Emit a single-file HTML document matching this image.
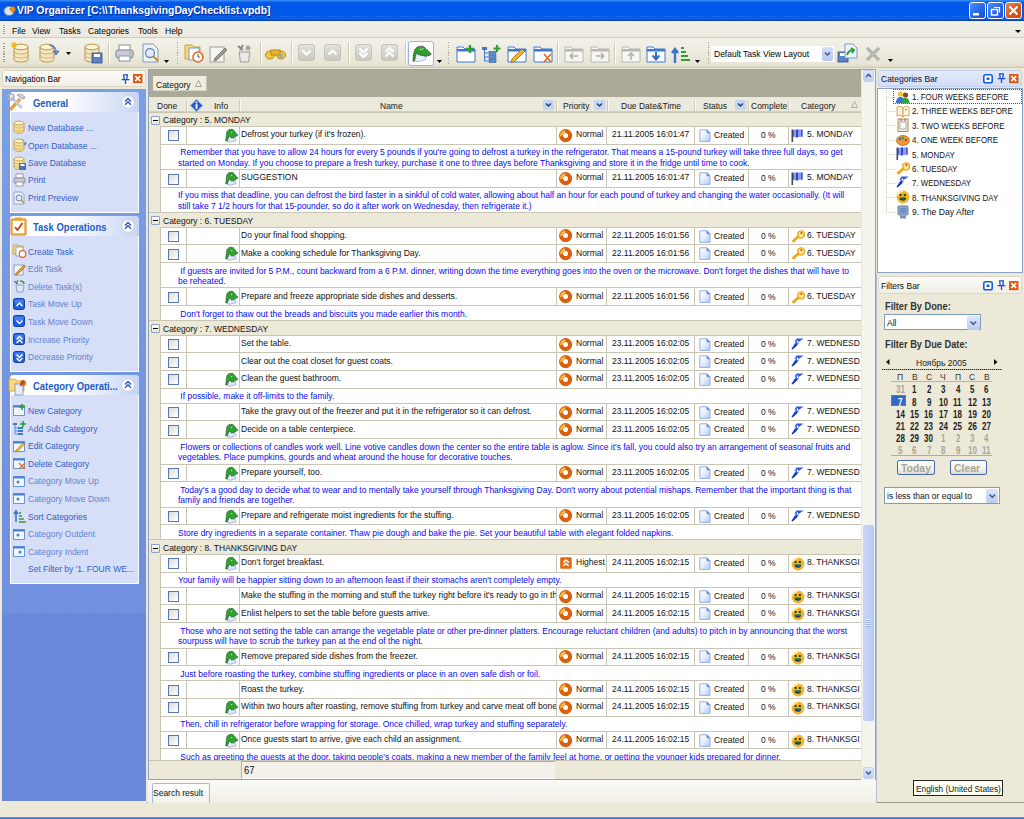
<!DOCTYPE html><html><head><meta charset="utf-8"><style>
*{box-sizing:border-box;margin:0;padding:0}
html,body{width:1024px;height:819px;overflow:hidden;background:#ECE9D8;font-family:"Liberation Sans",sans-serif;font-size:10px;line-height:10px;color:#000}
.a{position:absolute}
.tx{position:absolute;white-space:nowrap;transform:scaleX(.885);transform-origin:0 0;line-height:10px;font-size:9.6px}
.b{font-weight:bold}
svg{position:absolute;overflow:visible}
</style></head><body>
<svg width="0" height="0" style="position:absolute"><defs><linearGradient id="dg" x1="0" y1="0" x2="1" y2="1"><stop offset="0" stop-color="#FFFFFF"/><stop offset=".5" stop-color="#E6EEFC"/><stop offset="1" stop-color="#AFC6F2"/></linearGradient></defs></svg>
<div class="a" style="left:0px;top:0px;width:1024px;height:21px;background:linear-gradient(#3D8EF8 0px,#2C7CF4 1px,#0A60EC 2px,#0058E8 3px,#0058E8 15px,#0056E4 20px,#0844B8 20px)"></div>
<div class="a" style="left:0px;top:16px;width:1024px;height:1px;background:repeating-linear-gradient(90deg,rgba(0,0,0,0) 0 1px,rgba(90,160,255,.55) 1px 2px,rgba(0,0,0,0) 2px 3px)"></div>
<div class="a" style="left:0px;top:18px;width:1024px;height:1px;background:repeating-linear-gradient(90deg,rgba(90,160,255,.55) 0 1px,rgba(0,0,0,0) 1px 3px)"></div>
<svg style="left:3px;top:3px" width="14" height="14" viewBox="0 0 14 14"><ellipse cx="6" cy="8" rx="5" ry="4.5" fill="#DDE3EE" stroke="#7A8AA8" stroke-width=".8"/><path d="M6 6l4-3 3 4-3 3z" fill="#E8700A"/><circle cx="10" cy="6" r="2" fill="#F09020"/></svg>
<div class="tx " style="left:17px;top:5.2px;font-size:11.5px;color:#fff;font-weight:bold;text-shadow:1px 1px 0 #0A2A8C;transform:scaleX(.9)">VIP Organizer [C:\\ThanksgivingDayChecklist.vpdb]</div>
<div class="a" style="left:969px;top:2px;width:17px;height:17px;border:1px solid #fff;border-radius:3px;background:linear-gradient(135deg,#4F8FF8,#2563E6 60%,#1B50D0)"></div>
<svg style="left:969px;top:2px" width="17" height="17" viewBox="0 0 17 17"><rect x="4" y="11" width="6" height="2.5" fill="#fff"/></svg>
<div class="a" style="left:987px;top:2px;width:17px;height:17px;border:1px solid #fff;border-radius:3px;background:linear-gradient(135deg,#4F8FF8,#2563E6 60%,#1B50D0)"></div>
<svg style="left:987px;top:2px" width="17" height="17" viewBox="0 0 17 17"><rect x="4.5" y="7.5" width="6" height="5.5" fill="none" stroke="#fff" stroke-width="1.4"/><path d="M7 5.5h5.5v5" fill="none" stroke="#fff" stroke-width="1.2"/></svg>
<div class="a" style="left:1005px;top:2px;width:17px;height:17px;border:1px solid #fff;border-radius:3px;background:linear-gradient(135deg,#E8845A,#D85A1E 50%,#C8480E)"></div>
<svg style="left:1005px;top:2px" width="17" height="17" viewBox="0 0 17 17"><path d="M4.5 4.5l8 8M12.5 4.5l-8 8" stroke="#fff" stroke-width="2"/></svg>
<div class="a" style="left:0px;top:21px;width:1024px;height:17px;background:linear-gradient(#F0EFE6,#ECEADF);border-bottom:1px solid #D6C9B6"></div>
<div class="a" style="left:3px;top:25px;width:2px;height:1px;background:#A8A594"></div>
<div class="a" style="left:3px;top:27px;width:2px;height:1px;background:#A8A594"></div>
<div class="a" style="left:3px;top:29px;width:2px;height:1px;background:#A8A594"></div>
<div class="a" style="left:3px;top:31px;width:2px;height:1px;background:#A8A594"></div>
<div class="a" style="left:3px;top:33px;width:2px;height:1px;background:#A8A594"></div>
<div class="tx " style="left:11.5px;top:25.5px;">File</div>
<div class="tx " style="left:32px;top:25.5px;">View</div>
<div class="tx " style="left:58.5px;top:25.5px;">Tasks</div>
<div class="tx " style="left:88px;top:25.5px;">Categories</div>
<div class="tx " style="left:137.5px;top:25.5px;">Tools</div>
<div class="tx " style="left:165px;top:25.5px;">Help</div>
<svg style="left:1014px;top:29px" width="8" height="6" viewBox="0 0 8 6"><path d="M1 1h6l-3 3z" fill="#000"/></svg>
<div class="a" style="left:0px;top:38px;width:1024px;height:30px;background:linear-gradient(#F2F1E8 0%,#EEECE0 45%,#E8E5D6 85%,#DCD8C6 100%)"></div>
<div class="a" style="left:0px;top:67px;width:1024px;height:1px;background:#CBC7B3"></div>
<div class="a" style="left:3px;top:43.0px;width:2px;height:1.3px;background:#A09D8C"></div>
<div class="a" style="left:3px;top:45.6px;width:2px;height:1.3px;background:#A09D8C"></div>
<div class="a" style="left:3px;top:48.2px;width:2px;height:1.3px;background:#A09D8C"></div>
<div class="a" style="left:3px;top:50.8px;width:2px;height:1.3px;background:#A09D8C"></div>
<div class="a" style="left:3px;top:53.4px;width:2px;height:1.3px;background:#A09D8C"></div>
<div class="a" style="left:3px;top:56.0px;width:2px;height:1.3px;background:#A09D8C"></div>
<div class="a" style="left:3px;top:58.6px;width:2px;height:1.3px;background:#A09D8C"></div>
<div class="a" style="left:3px;top:61.2px;width:2px;height:1.3px;background:#A09D8C"></div>
<svg style="left:12px;top:43px" width="18" height="20" viewBox="0 0 18 20"><path d="M2 4v12c0 2 3 3 7 3s7-1 7-3V4" fill="#F3E7C0" stroke="#B89548" stroke-width="1"/><ellipse cx="9" cy="4" rx="7" ry="2.8" fill="#FBF3D8" stroke="#B89548"/><path d="M2 8c0 2 3 3 7 3s7-1 7-3M2 12c0 2 3 3 7 3s7-1 7-3" fill="none" stroke="#D8B060" stroke-width="1"/><path d="M0 0l4 4M4 0L0 4M2 -1v6M-1 2h6" stroke="#F5B818" stroke-width="1.2"/></svg>
<svg style="left:38px;top:43px" width="18" height="20" viewBox="0 0 18 20"><path d="M2 4v12c0 2 3 3 7 3s7-1 7-3V4" fill="#F3E7C0" stroke="#B89548" stroke-width="1"/><ellipse cx="9" cy="4" rx="7" ry="2.8" fill="#FBF3D8" stroke="#B89548"/><path d="M2 8c0 2 3 3 7 3s7-1 7-3M2 12c0 2 3 3 7 3s7-1 7-3" fill="none" stroke="#D8B060" stroke-width="1"/><path d="M11 2c4 0 7 2 7 6l-3 0 3 4 3-4h-2" fill="#5B8FD8" stroke="#3A6AB8" stroke-width=".8"/></svg>
<svg style="left:66px;top:52px" width="6" height="4" viewBox="0 0 6 4"><path d="M0 0h5l-2.5 3z" fill="#000"/></svg>
<svg style="left:83px;top:43px" width="18" height="20" viewBox="0 0 18 20"><path d="M2 4v12c0 2 3 3 7 3s7-1 7-3V4" fill="#F3E7C0" stroke="#B89548" stroke-width="1"/><ellipse cx="9" cy="4" rx="7" ry="2.8" fill="#FBF3D8" stroke="#B89548"/><path d="M2 8c0 2 3 3 7 3s7-1 7-3M2 12c0 2 3 3 7 3s7-1 7-3" fill="none" stroke="#D8B060" stroke-width="1"/><rect x="9" y="10" width="10" height="10" fill="#5B84C4" stroke="#2C4C8C" stroke-width=".8"/><rect x="11" y="11" width="6" height="3" fill="#fff"/></svg>
<div class="a" style="left:108px;top:42px;width:1px;height:22px;background:#CFCBB8"></div>
<div class="a" style="left:109px;top:42px;width:1px;height:22px;background:#FFFFFF"></div>
<svg style="left:115px;top:45px" width="19" height="17" viewBox="0 0 19 17"><rect x="4" y="0" width="11" height="6" fill="#fff" stroke="#8C8C8C"/><rect x="1" y="5" width="17" height="8" rx="2" fill="#C8CCD8" stroke="#7C808C"/><rect x="4" y="11" width="11" height="5" fill="#fff" stroke="#8C8C8C"/><circle cx="15" cy="8" r=".8" fill="#30B030"/></svg>
<svg style="left:142px;top:43px" width="18" height="20" viewBox="0 0 18 20"><path d="M1 1h10l5 5v13H1z" fill="#EEF3FB" stroke="#7E98C0"/><circle cx="8" cy="10" r="4.5" fill="#DDEAF8" stroke="#6A88B8" stroke-width="1.3"/><path d="M11 13l5 5" stroke="#C89020" stroke-width="2"/></svg>
<svg style="left:164px;top:60px" width="6" height="4" viewBox="0 0 6 4"><path d="M0 0h5l-2.5 3z" fill="#000"/></svg>
<div class="a" style="left:177px;top:42.0px;width:1px;height:1.3px;background:#A8A594"></div>
<div class="a" style="left:177px;top:44.6px;width:1px;height:1.3px;background:#A8A594"></div>
<div class="a" style="left:177px;top:47.2px;width:1px;height:1.3px;background:#A8A594"></div>
<div class="a" style="left:177px;top:49.8px;width:1px;height:1.3px;background:#A8A594"></div>
<div class="a" style="left:177px;top:52.4px;width:1px;height:1.3px;background:#A8A594"></div>
<div class="a" style="left:177px;top:55.0px;width:1px;height:1.3px;background:#A8A594"></div>
<div class="a" style="left:177px;top:57.6px;width:1px;height:1.3px;background:#A8A594"></div>
<div class="a" style="left:177px;top:60.2px;width:1px;height:1.3px;background:#A8A594"></div>
<div class="a" style="left:177px;top:62.8px;width:1px;height:1.3px;background:#A8A594"></div>
<svg style="left:184px;top:43px" width="20" height="20" viewBox="0 0 20 20"><path d="M1 2h7l2 2h6v12H1z" fill="#F7D87A" stroke="#C8A040"/><rect x="5" y="5" width="10" height="12" fill="#fff" stroke="#7E98C0"/><circle cx="14" cy="14" r="5" fill="#fff" stroke="#E06818" stroke-width="1.5"/><path d="M14 11v3h2" stroke="#555" fill="none"/></svg>
<svg style="left:209px;top:43px" width="20" height="20" viewBox="0 0 20 20"><rect x="1" y="4" width="14" height="15" fill="#F4F4F0" stroke="#A0A098"/><path d="M6 15l10-10 2 2-10 10-3 1z" fill="#9A9A92" stroke="#707068" stroke-width=".8"/></svg>
<svg style="left:235px;top:43px" width="20" height="20" viewBox="0 0 20 20"><path d="M4 9h11l-1.5 10h-8z" fill="#E8E8E4" stroke="#9C9C98"/><path d="M3 3l5 4M8 2l-3 5" stroke="#8A8A86" stroke-width="2"/><circle cx="13" cy="5" r="2.5" fill="#A8A8A4"/></svg>
<div class="a" style="left:260px;top:42px;width:1px;height:22px;background:#CFCBB8"></div>
<div class="a" style="left:261px;top:42px;width:1px;height:22px;background:#FFFFFF"></div>
<svg style="left:265px;top:47px" width="21" height="13" viewBox="0 0 21 13"><ellipse cx="5" cy="8" rx="4.5" ry="4" fill="#F2C838" stroke="#B08A18"/><ellipse cx="16" cy="8" rx="4.5" ry="4" fill="#F2C838" stroke="#B08A18"/><rect x="6" y="3" width="9" height="5" fill="#E8B828" stroke="#B08A18"/><circle cx="16" cy="9" r="2" fill="#8CA8D8"/></svg>
<div class="a" style="left:291px;top:42px;width:1px;height:22px;background:#CFCBB8"></div>
<div class="a" style="left:292px;top:42px;width:1px;height:22px;background:#FFFFFF"></div>
<div class="a" style="left:298px;top:44px;width:17px;height:17px;border-radius:3px;background:linear-gradient(#E2E2DA,#C8C8C0);border:1px solid #C4C4BA"></div>
<svg style="left:298px;top:44px" width="17" height="17" viewBox="0 0 17 17"><path d="M4.5 6.5l4 4 4-4" stroke="#fff" stroke-width="2.2" fill="none"/></svg>
<div class="a" style="left:324px;top:44px;width:17px;height:17px;border-radius:3px;background:linear-gradient(#E2E2DA,#C8C8C0);border:1px solid #C4C4BA"></div>
<svg style="left:324px;top:44px" width="17" height="17" viewBox="0 0 17 17"><path d="M4.5 10.5l4-4 4 4" stroke="#fff" stroke-width="2.2" fill="none"/></svg>
<div class="a" style="left:348px;top:42px;width:1px;height:22px;background:#CFCBB8"></div>
<div class="a" style="left:349px;top:42px;width:1px;height:22px;background:#FFFFFF"></div>
<div class="a" style="left:355px;top:44px;width:17px;height:17px;border-radius:3px;background:linear-gradient(#E2E2DA,#C8C8C0);border:1px solid #C4C4BA"></div>
<svg style="left:355px;top:44px" width="17" height="17" viewBox="0 0 17 17"><path d="M4.5 4.5l4 4 4-4M4.5 9l4 4 4-4" stroke="#fff" stroke-width="2" fill="none"/></svg>
<div class="a" style="left:381px;top:44px;width:17px;height:17px;border-radius:3px;background:linear-gradient(#E2E2DA,#C8C8C0);border:1px solid #C4C4BA"></div>
<svg style="left:381px;top:44px" width="17" height="17" viewBox="0 0 17 17"><path d="M4.5 8l4-4 4 4M4.5 12.5l4-4 4 4" stroke="#fff" stroke-width="2" fill="none"/></svg>
<div class="a" style="left:405px;top:42px;width:1px;height:22px;background:#CFCBB8"></div>
<div class="a" style="left:406px;top:42px;width:1px;height:22px;background:#FFFFFF"></div>
<div class="a" style="left:408px;top:41px;width:25.5px;height:25px;border:1px solid #9AB4DE;border-radius:3px;background:#FFFFFF"></div>
<svg style="left:411.5px;top:45px" width="21" height="18" viewBox="0 0 21 18"><path d="M3 16.5L4.5 6 8 10l6.5 1-1 3.5L7 16.5z" fill="#E6EEFA" stroke="#A8BCE0" stroke-width=".9"/><path d="M1 16C1 10 2 5.5 3.8 3.3 5.3 1.6 8 .8 11.3 1.3L19.5 9 17.5 10.5 13.5 11.3 10 10.5 6 9.5 4.2 8 2.2 16.3z" fill="#2E9E2E" stroke="#303030" stroke-width=".9" stroke-dasharray="1.3 .9"/><circle cx="8.5" cy="4.5" r=".8" fill="#CFE8CF"/><circle cx="10.8" cy="4" r=".8" fill="#CFE8CF"/></svg>
<svg style="left:436.5px;top:60px" width="6" height="4" viewBox="0 0 6 4"><path d="M0 0h5l-2.5 3z" fill="#000"/></svg>
<div class="a" style="left:448px;top:42.0px;width:1px;height:1.3px;background:#A8A594"></div>
<div class="a" style="left:448px;top:44.6px;width:1px;height:1.3px;background:#A8A594"></div>
<div class="a" style="left:448px;top:47.2px;width:1px;height:1.3px;background:#A8A594"></div>
<div class="a" style="left:448px;top:49.8px;width:1px;height:1.3px;background:#A8A594"></div>
<div class="a" style="left:448px;top:52.4px;width:1px;height:1.3px;background:#A8A594"></div>
<div class="a" style="left:448px;top:55.0px;width:1px;height:1.3px;background:#A8A594"></div>
<div class="a" style="left:448px;top:57.6px;width:1px;height:1.3px;background:#A8A594"></div>
<div class="a" style="left:448px;top:60.2px;width:1px;height:1.3px;background:#A8A594"></div>
<div class="a" style="left:448px;top:62.8px;width:1px;height:1.3px;background:#A8A594"></div>
<svg style="left:456px;top:45px" width="20" height="18" viewBox="0 0 20 18"><path d="M1 2h6l2 2h10v13H1z" fill="#fff" stroke="#3C7AD0"/><rect x="1" y="4" width="18" height="2.5" fill="#3C7AD0"/><path d="M14 0v8M10 4h8" stroke="#2EA02E" stroke-width="2.4"/></svg>
<svg style="left:481px;top:45px" width="20" height="18" viewBox="0 0 20 18"><rect x="1" y="2" width="5" height="3" fill="#3C7AD0"/><path d="M3.5 5v11M3.5 8h4M3.5 12h4M3.5 16h4" stroke="#3C7AD0"/><rect x="8" y="6.5" width="7" height="3" fill="#5A8CD8" stroke="#2E5EA8" stroke-width=".6"/><rect x="8" y="10.5" width="7" height="3" fill="#5A8CD8" stroke="#2E5EA8" stroke-width=".6"/><rect x="8" y="14.5" width="7" height="3" fill="#5A8CD8" stroke="#2E5EA8" stroke-width=".6"/><path d="M16 0v7M12.5 3.5h7" stroke="#2EA02E" stroke-width="2.2"/></svg>
<svg style="left:507px;top:45px" width="20" height="18" viewBox="0 0 20 18"><path d="M1 2h6l2 2h10v13H1z" fill="#fff" stroke="#3C7AD0"/><rect x="1" y="4" width="18" height="2.5" fill="#3C7AD0"/><path d="M5 14l10-10 2.5 2.5-10 10-3.5 1z" fill="#F2B430" stroke="#9C6A10" stroke-width=".8"/></svg>
<svg style="left:533px;top:45px" width="20" height="18" viewBox="0 0 20 18"><path d="M1 2h6l2 2h10v13H1z" fill="#fff" stroke="#3C7AD0"/><rect x="1" y="4" width="18" height="2.5" fill="#3C7AD0"/><path d="M11 9l7 8M18 9l-7 8" stroke="#E07020" stroke-width="1.8"/></svg>
<div class="a" style="left:557px;top:42px;width:1px;height:22px;background:#CFCBB8"></div>
<div class="a" style="left:558px;top:42px;width:1px;height:22px;background:#FFFFFF"></div>
<svg style="left:564px;top:45px" width="20" height="18" viewBox="0 0 20 18"><path d="M1 2h6l2 2h10v13H1z" fill="#F6F6F2" stroke="#B8B8B0"/><rect x="1" y="4" width="18" height="2.5" fill="#B8B8B0"/><path d="M6 11h8M6 11l3-3M6 11l3 3" stroke="#B0B0A8" stroke-width="1.5" fill="none"/></svg>
<svg style="left:590px;top:45px" width="20" height="18" viewBox="0 0 20 18"><path d="M1 2h6l2 2h10v13H1z" fill="#F6F6F2" stroke="#B8B8B0"/><rect x="1" y="4" width="18" height="2.5" fill="#B8B8B0"/><path d="M6 11h8M14 11l-3-3M14 11l-3 3" stroke="#B0B0A8" stroke-width="1.5" fill="none"/></svg>
<div class="a" style="left:614px;top:42px;width:1px;height:22px;background:#CFCBB8"></div>
<div class="a" style="left:615px;top:42px;width:1px;height:22px;background:#FFFFFF"></div>
<svg style="left:621px;top:45px" width="20" height="18" viewBox="0 0 20 18"><path d="M1 2h6l2 2h10v13H1z" fill="#F6F6F2" stroke="#B8B8B0"/><rect x="1" y="4" width="18" height="2.5" fill="#B8B8B0"/><path d="M10 15V8M7 11l3-3 3 3" stroke="#B0B0A8" stroke-width="1.5" fill="none"/></svg>
<svg style="left:646px;top:45px" width="20" height="18" viewBox="0 0 20 18"><path d="M1 2h6l2 2h10v13H1z" fill="#fff" stroke="#3C7AD0"/><rect x="1" y="4" width="18" height="2.5" fill="#3C7AD0"/><path d="M10 7v7M6.5 10.5l3.5 4 3.5-4" stroke="#2E6AC8" stroke-width="2" fill="none"/></svg>
<svg style="left:671px;top:44px" width="20" height="20" viewBox="0 0 20 20"><path d="M4 19V6M1 9l3-4 3 4" stroke="#3A78D0" stroke-width="2.4" fill="none"/><path d="M10 4h3M10 8h5M10 12h7M10 16h9" stroke="#3A9A3A" stroke-width="2.2"/></svg>
<svg style="left:695px;top:60px" width="6" height="4" viewBox="0 0 6 4"><path d="M0 0h5l-2.5 3z" fill="#000"/></svg>
<div class="a" style="left:708px;top:42.0px;width:1px;height:1.3px;background:#A8A594"></div>
<div class="a" style="left:708px;top:44.6px;width:1px;height:1.3px;background:#A8A594"></div>
<div class="a" style="left:708px;top:47.2px;width:1px;height:1.3px;background:#A8A594"></div>
<div class="a" style="left:708px;top:49.8px;width:1px;height:1.3px;background:#A8A594"></div>
<div class="a" style="left:708px;top:52.4px;width:1px;height:1.3px;background:#A8A594"></div>
<div class="a" style="left:708px;top:55.0px;width:1px;height:1.3px;background:#A8A594"></div>
<div class="a" style="left:708px;top:57.6px;width:1px;height:1.3px;background:#A8A594"></div>
<div class="a" style="left:708px;top:60.2px;width:1px;height:1.3px;background:#A8A594"></div>
<div class="a" style="left:708px;top:62.8px;width:1px;height:1.3px;background:#A8A594"></div>
<div class="a" style="left:711px;top:45.5px;width:123px;height:16px;background:#fff;border:1px solid #FFFFFF"></div>
<div class="tx " style="left:714px;top:49px;">Default Task View Layout</div>
<div class="a" style="left:822px;top:46.5px;width:11px;height:14px;background:linear-gradient(#D6E0F8,#B4C6F0);border-radius:2px"></div>
<svg style="left:822px;top:47px" width="11" height="14" viewBox="0 0 11 14"><path d="M3 5.5l2.5 2.5 2.5-2.5" stroke="#4D6185" stroke-width="1.6" fill="none"/></svg>
<svg style="left:837px;top:43px" width="21" height="20" viewBox="0 0 21 20"><rect x="1" y="9" width="10" height="10" fill="#5B84C4" stroke="#2C4C8C" stroke-width=".8"/><rect x="3" y="10" width="6" height="3" fill="#fff"/><path d="M8 1h8l4 4v10H8z" fill="#EEF4FF" stroke="#7E98C0"/><path d="M10 12c1-4 4-5 7-5M14 5l3 2-2 3" stroke="#2EA02E" stroke-width="2" fill="none"/></svg>
<svg style="left:865px;top:46px" width="16" height="16" viewBox="0 0 16 16"><path d="M2 2l12 12M14 2L2 14" stroke="#9C9C94" stroke-width="3"/><path d="M2 2l12 12M14 2L2 14" stroke="#C4C4BC" stroke-width="1.4"/></svg>
<svg style="left:888px;top:59px" width="6" height="4" viewBox="0 0 6 4"><path d="M0 0h5l-2.5 3z" fill="#000"/></svg>
<div class="a" style="left:0px;top:802px;width:1024px;height:1px;background:#9C9886"></div>
<div class="a" style="left:0px;top:803px;width:1024px;height:14px;background:#ECE9D8"></div>
<div class="a" style="left:0px;top:817px;width:1024px;height:2px;background:linear-gradient(#6A9AF0,#2E64D8)"></div>
<div class="a" style="left:0px;top:68px;width:147px;height:735px;background:#ECE9D8"></div>
<div class="a" style="left:2px;top:69.5px;width:144px;height:17px;border:1px solid #DAD6C6;border-radius:3px;background:linear-gradient(#FCFBF7,#F1EFE6)"></div>
<div class="tx " style="left:4.5px;top:74px;color:#000">Navigation Bar</div>
<svg style="left:120.5px;top:73.5px" width="9" height="10" viewBox="0 0 9 10"><path d="M2 .8h5M2.6 .8l.6 4.2M6.4 .8L5.8 5M.6 5.6h7.8M4.5 5.6V10" stroke="#2050C8" stroke-width="1.3" fill="none"/></svg>
<svg style="left:133px;top:74px" width="9.5" height="9.2" viewBox="0 0 9.5 9.2"><rect x="0" y="0" width="9.5" height="9.2" fill="#DA5C12"/><path d="M2.3 2.2l4.9 4.8M7.2 2.2L2.3 7" stroke="#fff" stroke-width="1.7"/></svg>
<div class="a" style="left:2px;top:89px;width:144px;height:712px;background:linear-gradient(#7BA0E6 0px,#7596E2 250px,#6F8FDF 524px,#6A89DC 524.5px,#6A89DC 712px)"></div>
<div class="a" style="left:9px;top:583.6px;width:136px;height:29.5px;background:repeating-linear-gradient(90deg,rgba(255,255,255,.05) 0 1px,rgba(0,0,0,0) 1px 3px)"></div>
<div class="a" style="left:9.5px;top:92px;width:129px;height:20px;border-radius:3px 3px 0 0;background:linear-gradient(90deg,#FFFFFF 0%,#FFFFFF 40%,#E4EBFA 70%,#C7D4F4 100%)"></div>
<div class="a" style="left:9.5px;top:112px;width:129px;height:101px;background:#D6DFF7;border:1px solid #fff;border-top:none"></div>
<svg style="left:7px;top:93px" width="19" height="20" viewBox="0 0 19 20"><path d="M3 17L13 6" stroke="#E0801A" stroke-width="3.2"/><path d="M3 17L13 6" stroke="#F4B040" stroke-width="1.2"/><path d="M4 4l11 11" stroke="#C8CCD4" stroke-width="3"/><path d="M10 2c3-2 7 0 8 3l-3 1-2-2z" fill="#D0D4DC" stroke="#8890A0" stroke-width=".8"/><circle cx="4" cy="4" r="3" fill="none" stroke="#A8B0C0" stroke-width="1.4"/></svg>
<div class="tx " style="left:32.5px;top:97.8px;color:#215DC6;font-weight:bold;font-size:11px;transform:scaleX(.86)">General</div>
<svg style="left:121px;top:95.0px" width="14" height="14" viewBox="0 0 14 14"><circle cx="7" cy="7" r="6.3" fill="#fff" stroke="#C8D0E0" stroke-width="1"/><path d="M4 6.5l3-3 3 3M4 9.8l3-3 3 3" stroke="#2552C0" stroke-width="1.4" fill="none"/></svg>
<svg style="left:13px;top:120.4px" width="12" height="14" viewBox="0 0 12 14"><path d="M1 3v8c0 1.5 2 2.3 5 2.3s5-.8 5-2.3V3" fill="#F3E2A8" stroke="#C09838" stroke-width=".8"/><ellipse cx="6" cy="3" rx="5" ry="2" fill="#FBF0C8" stroke="#C09838" stroke-width=".8"/><path d="M1 6c0 1.3 2 2 5 2s5-.7 5-2M1 9c0 1.3 2 2 5 2s5-.7 5-2" fill="none" stroke="#D8A838" stroke-width=".8"/></svg>
<div class="tx " style="left:28.3px;top:122.9px;color:#3560C8">New Database ...</div>
<svg style="left:13px;top:138px" width="12" height="14" viewBox="0 0 12 14"><path d="M1 3v8c0 1.5 2 2.3 5 2.3s5-.8 5-2.3V3" fill="#F3E2A8" stroke="#C09838" stroke-width=".8"/><ellipse cx="6" cy="3" rx="5" ry="2" fill="#FBF0C8" stroke="#C09838" stroke-width=".8"/><path d="M1 6c0 1.3 2 2 5 2s5-.7 5-2M1 9c0 1.3 2 2 5 2s5-.7 5-2" fill="none" stroke="#D8A838" stroke-width=".8"/><path d="M7 1c3 0 5 2 5 4l-2 0 2 3 2-3" fill="#5B8FD8"/></svg>
<div class="tx " style="left:28.3px;top:140.5px;color:#3560C8">Open Database ...</div>
<svg style="left:13px;top:155.5px" width="12" height="14" viewBox="0 0 12 14"><path d="M1 3v8c0 1.5 2 2.3 5 2.3s5-.8 5-2.3V3" fill="#F3E2A8" stroke="#C09838" stroke-width=".8"/><ellipse cx="6" cy="3" rx="5" ry="2" fill="#FBF0C8" stroke="#C09838" stroke-width=".8"/><path d="M1 6c0 1.3 2 2 5 2s5-.7 5-2M1 9c0 1.3 2 2 5 2s5-.7 5-2" fill="none" stroke="#D8A838" stroke-width=".8"/><rect x="6" y="7" width="7" height="7" fill="#4A70B8"/><rect x="7.5" y="8" width="4" height="2" fill="#fff"/></svg>
<div class="tx " style="left:28.3px;top:158.0px;color:#3560C8">Save Database</div>
<svg style="left:13px;top:172.8px" width="13" height="14" viewBox="0 0 13 14"><rect x="3" y="1" width="7" height="4" fill="#fff" stroke="#8C8C8C" stroke-width=".8"/><rect x="1" y="5" width="11" height="5" rx="1" fill="#C8CCD8" stroke="#7C808C" stroke-width=".8"/><rect x="3" y="9" width="7" height="4" fill="#fff" stroke="#8C8C8C" stroke-width=".8"/></svg>
<div class="tx " style="left:28.3px;top:175.3px;color:#3560C8">Print</div>
<svg style="left:13px;top:190.5px" width="13" height="14" viewBox="0 0 13 14"><path d="M1 1h7l3 3v9H1z" fill="#EEF3FB" stroke="#7E98C0" stroke-width=".8"/><circle cx="6" cy="7" r="3" fill="#DDEAF8" stroke="#6A88B8"/><path d="M8 9l3 3" stroke="#C89020" stroke-width="1.5"/></svg>
<div class="tx " style="left:28.3px;top:193.0px;color:#3560C8">Print Preview</div>
<div class="a" style="left:9.5px;top:216px;width:129px;height:19.5px;border-radius:3px 3px 0 0;background:linear-gradient(90deg,#FFFFFF 0%,#FFFFFF 40%,#E4EBFA 70%,#C7D4F4 100%)"></div>
<div class="a" style="left:9.5px;top:235.5px;width:129px;height:136.2px;background:#D6DFF7;border:1px solid #fff;border-top:none"></div>
<svg style="left:10px;top:217px" width="17" height="19" viewBox="0 0 17 19"><rect x="1" y="2" width="15" height="16" rx="1" fill="#F6C060" stroke="#C88020"/><rect x="3" y="4" width="11" height="12" fill="#fff"/><rect x="5" y="0.5" width="7" height="3" rx="1" fill="#E8A030"/><path d="M5 10l2.5 3 5-7" stroke="#D04010" stroke-width="1.8" fill="none"/></svg>
<div class="tx " style="left:32.5px;top:221.8px;color:#215DC6;font-weight:bold;font-size:11px;transform:scaleX(.86)">Task Operations</div>
<svg style="left:121px;top:218.75px" width="14" height="14" viewBox="0 0 14 14"><circle cx="7" cy="7" r="6.3" fill="#fff" stroke="#C8D0E0" stroke-width="1"/><path d="M4 6.5l3-3 3 3M4 9.8l3-3 3 3" stroke="#2552C0" stroke-width="1.4" fill="none"/></svg>
<svg style="left:13px;top:244px" width="13" height="14" viewBox="0 0 13 14"><path d="M0 1h5l1 1h4v8H0z" fill="#F7D87A" stroke="#C8A040" stroke-width=".8"/><rect x="3" y="3" width="7" height="9" fill="#fff" stroke="#7E98C0" stroke-width=".8"/><circle cx="9.5" cy="10" r="3.3" fill="#fff" stroke="#E06818" stroke-width="1.2"/></svg>
<div class="tx " style="left:28.3px;top:246.5px;color:#3560C8">Create Task</div>
<svg style="left:13px;top:261.6px" width="13" height="14" viewBox="0 0 13 14"><rect x="1" y="3" width="9" height="10" fill="#F4F6FA" stroke="#8090B0" stroke-width=".8"/><path d="M3 11l8-8 1.5 1.5-8 8-2 .5z" fill="#E8A030" stroke="#806020" stroke-width=".6"/></svg>
<div class="tx " style="left:28.3px;top:264.1px;color:#6583D0">Edit Task</div>
<svg style="left:13px;top:279.2px" width="13" height="14" viewBox="0 0 13 14"><path d="M3 6h8l-1 7H4z" fill="#D8E4F4" stroke="#7E98C0" stroke-width=".8"/><path d="M1 2l4 3M5 1L3 5" stroke="#707880" stroke-width="1.4"/><path d="M7 2c2 0 4 1 4 3" stroke="#30A030" stroke-width="1.6" fill="none"/></svg>
<div class="tx " style="left:28.3px;top:281.7px;color:#6583D0">Delete Task(s)</div>
<svg style="left:13px;top:297.8px" width="12" height="12" viewBox="0 0 12 12"><rect x=".5" y=".5" width="11" height="11" rx="2" fill="#1E5FE0" stroke="#1040A8"/><rect x="1.5" y="1.5" width="9" height="4" rx="1" fill="#5A8EF0" opacity=".6"/><path d="M3.5 8l3-3 3 3" stroke="#fff" stroke-width="1.5" fill="none"/></svg>
<div class="tx " style="left:28.3px;top:299.3px;color:#6583D0">Task Move Up</div>
<svg style="left:13px;top:315.4px" width="12" height="12" viewBox="0 0 12 12"><rect x=".5" y=".5" width="11" height="11" rx="2" fill="#1E5FE0" stroke="#1040A8"/><rect x="1.5" y="1.5" width="9" height="4" rx="1" fill="#5A8EF0" opacity=".6"/><path d="M3.5 5.5l3 3 3-3" stroke="#fff" stroke-width="1.5" fill="none"/></svg>
<div class="tx " style="left:28.3px;top:316.9px;color:#6583D0">Task Move Down</div>
<svg style="left:13px;top:333px" width="12" height="12" viewBox="0 0 12 12"><rect x=".5" y=".5" width="11" height="11" rx="2" fill="#1E5FE0" stroke="#1040A8"/><rect x="1.5" y="1.5" width="9" height="4" rx="1" fill="#5A8EF0" opacity=".6"/><path d="M3.5 6.5l3-3 3 3M3.5 10l3-3 3 3" stroke="#fff" stroke-width="1.5" fill="none"/></svg>
<div class="tx " style="left:28.3px;top:334.5px;color:#6583D0">Increase Priority</div>
<svg style="left:13px;top:350.6px" width="12" height="12" viewBox="0 0 12 12"><rect x=".5" y=".5" width="11" height="11" rx="2" fill="#1E5FE0" stroke="#1040A8"/><rect x="1.5" y="1.5" width="9" height="4" rx="1" fill="#5A8EF0" opacity=".6"/><path d="M3.5 3.5l3 3 3-3M3.5 7l3 3 3-3" stroke="#fff" stroke-width="1.5" fill="none"/></svg>
<div class="tx " style="left:28.3px;top:352.1px;color:#6583D0">Decrease Priority</div>
<div class="a" style="left:9.5px;top:374.7px;width:129px;height:20.0px;border-radius:3px 3px 0 0;background:linear-gradient(90deg,#FFFFFF 0%,#FFFFFF 40%,#E4EBFA 70%,#C7D4F4 100%)"></div>
<div class="a" style="left:9.5px;top:394.7px;width:129px;height:188.90000000000003px;background:#D6DFF7;border:1px solid #fff;border-top:none"></div>
<svg style="left:8px;top:374.7px" width="22" height="22" viewBox="0 0 22 22"><path d="M1 4h6l2 2h7v10H1z" fill="#F8D878" stroke="#D0A030" stroke-width=".8"/><rect x="7" y="9" width="8" height="11" fill="#E4ECF8" stroke="#7890B8" stroke-width=".8"/><circle cx="15" cy="8" r="3" fill="#E06818"/><path d="M12 11l4-5" stroke="#703010" stroke-width="1"/></svg>
<div class="tx " style="left:32.5px;top:380.5px;color:#215DC6;font-weight:bold;font-size:11px;transform:scaleX(.86)">Category Operati...</div>
<svg style="left:121px;top:377.7px" width="14" height="14" viewBox="0 0 14 14"><circle cx="7" cy="7" r="6.3" fill="#fff" stroke="#C8D0E0" stroke-width="1"/><path d="M4 6.5l3-3 3 3M4 9.8l3-3 3 3" stroke="#2552C0" stroke-width="1.4" fill="none"/></svg>
<svg style="left:13px;top:404.4px" width="13" height="12" viewBox="0 0 13 12"><rect x=".5" y="1.5" width="11" height="10" fill="#F2F6FC" stroke="#4A80D0" stroke-width=".8"/><rect x=".5" y="1.5" width="11" height="2" fill="#4A80D0"/><path d="M9 0v6M6 3h6" stroke="#2EA02E" stroke-width="1.6"/></svg>
<div class="tx " style="left:28.3px;top:405.9px;color:#3560C8">New Category</div>
<svg style="left:13px;top:421px" width="13" height="14" viewBox="0 0 13 14"><rect x="0" y="2" width="4" height="2" fill="#3C7AD0"/><path d="M2 4v9M2 7h3M2 10h3M2 13h3" stroke="#3C7AD0" stroke-width=".8"/><rect x="5" y="6" width="5" height="2" fill="#3C7AD0"/><rect x="5" y="9" width="5" height="2" fill="#3C7AD0"/><rect x="5" y="12" width="5" height="2" fill="#3C7AD0"/><path d="M10 0v6M7 3h6" stroke="#2EA02E" stroke-width="1.6"/></svg>
<div class="tx " style="left:28.3px;top:423.5px;color:#3560C8">Add Sub Category</div>
<svg style="left:13px;top:439.6px" width="13" height="12" viewBox="0 0 13 12"><rect x=".5" y="1.5" width="11" height="10" fill="#F2F6FC" stroke="#4A80D0" stroke-width=".8"/><rect x=".5" y="1.5" width="11" height="2" fill="#4A80D0"/><path d="M3 10l7-7 1.5 1.5-7 7-2 .5z" fill="#F2B430" stroke="#9C6A10" stroke-width=".5"/></svg>
<div class="tx " style="left:28.3px;top:441.1px;color:#3560C8">Edit Category</div>
<svg style="left:13px;top:457.2px" width="13" height="12" viewBox="0 0 13 12"><rect x=".5" y="1.5" width="11" height="10" fill="#F2F6FC" stroke="#4A80D0" stroke-width=".8"/><rect x=".5" y="1.5" width="11" height="2" fill="#4A80D0"/><path d="M6 6l6 6M12 6l-6 6" stroke="#E07020" stroke-width="1.4"/></svg>
<div class="tx " style="left:28.3px;top:458.7px;color:#3560C8">Delete Category</div>
<svg style="left:13px;top:474.8px" width="13" height="12" viewBox="0 0 13 12"><rect x=".5" y="1.5" width="11" height="10" fill="#F2F6FC" stroke="#4A80D0" stroke-width=".8"/><rect x=".5" y="1.5" width="11" height="2" fill="#4A80D0"/><circle cx="5" cy="7" r="1.5" fill="#4A80D0"/></svg>
<div class="tx " style="left:28.3px;top:476.3px;color:#6583D0">Category Move Up</div>
<svg style="left:13px;top:492.4px" width="13" height="12" viewBox="0 0 13 12"><rect x=".5" y="1.5" width="11" height="10" fill="#F2F6FC" stroke="#4A80D0" stroke-width=".8"/><rect x=".5" y="1.5" width="11" height="2" fill="#4A80D0"/><circle cx="5" cy="7" r="1.5" fill="#4A80D0"/></svg>
<div class="tx " style="left:28.3px;top:493.9px;color:#6583D0">Category Move Down</div>
<svg style="left:13px;top:509px" width="13" height="14" viewBox="0 0 13 14"><path d="M3 13V3M1 5l2-3 2 3" stroke="#3A78D0" stroke-width="1.6" fill="none"/><path d="M6 4h2M6 7h3M6 10h5M6 13h7" stroke="#3A9A3A" stroke-width="1.5"/></svg>
<div class="tx " style="left:28.3px;top:511.5px;color:#3560C8">Sort Categories</div>
<svg style="left:13px;top:527.6px" width="13" height="12" viewBox="0 0 13 12"><rect x=".5" y="1.5" width="11" height="10" fill="#F2F6FC" stroke="#4A80D0" stroke-width=".8"/><rect x=".5" y="1.5" width="11" height="2" fill="#4A80D0"/><circle cx="5" cy="7" r="1.5" fill="#4A80D0"/></svg>
<div class="tx " style="left:28.3px;top:529.1px;color:#6583D0">Category Outdent</div>
<svg style="left:13px;top:545.2px" width="13" height="12" viewBox="0 0 13 12"><rect x=".5" y="1.5" width="11" height="10" fill="#F2F6FC" stroke="#4A80D0" stroke-width=".8"/><rect x=".5" y="1.5" width="11" height="2" fill="#4A80D0"/><circle cx="7" cy="7" r="1.5" fill="#4A80D0"/></svg>
<div class="tx " style="left:28.3px;top:546.7px;color:#6583D0">Category Indent</div>
<div class="tx " style="left:28.3px;top:564.3px;color:#3560C8">Set Filter by '1. FOUR WE...</div>
<div class="a" style="left:148px;top:69px;width:728px;height:711px;background:#ECE9D8;border:1px solid #8DA2C4"></div>
<div class="a" style="left:149px;top:70px;width:712px;height:27px;background:#ABAA99"></div>
<div class="a" style="left:153px;top:76px;width:54px;height:15px;background:#EFEDE1;border-bottom:1px solid #D6D3C4;border-right:1px solid #C9C6B6"></div>
<div class="tx " style="left:156.3px;top:80px;color:#111">Category</div>
<svg style="left:195px;top:79.5px" width="7" height="7" viewBox="0 0 7 7"><path d="M3.5 .5L6.5 6.5H.5z" fill="none" stroke="#A8A898" stroke-width="1"/></svg>
<div class="a" style="left:149px;top:97px;width:712px;height:15px;background:#EBE9DB"></div>
<div class="a" style="left:149px;top:111px;width:712px;height:1px;background:#D4CFBE"></div>
<div class="a" style="left:185.5px;top:99.5px;width:1px;height:11px;background:#CFCBB9"></div>
<div class="a" style="left:186.5px;top:99.5px;width:1px;height:11px;background:#FBFAF5"></div>
<div class="a" style="left:238.6px;top:99.5px;width:1px;height:11px;background:#CFCBB9"></div>
<div class="a" style="left:239.6px;top:99.5px;width:1px;height:11px;background:#FBFAF5"></div>
<div class="a" style="left:556px;top:99.5px;width:1px;height:11px;background:#CFCBB9"></div>
<div class="a" style="left:557px;top:99.5px;width:1px;height:11px;background:#FBFAF5"></div>
<div class="a" style="left:606.6px;top:99.5px;width:1px;height:11px;background:#CFCBB9"></div>
<div class="a" style="left:607.6px;top:99.5px;width:1px;height:11px;background:#FBFAF5"></div>
<div class="a" style="left:694px;top:99.5px;width:1px;height:11px;background:#CFCBB9"></div>
<div class="a" style="left:695px;top:99.5px;width:1px;height:11px;background:#FBFAF5"></div>
<div class="a" style="left:748.4px;top:99.5px;width:1px;height:11px;background:#CFCBB9"></div>
<div class="a" style="left:749.4px;top:99.5px;width:1px;height:11px;background:#FBFAF5"></div>
<div class="a" style="left:788px;top:99.5px;width:1px;height:11px;background:#CFCBB9"></div>
<div class="a" style="left:789px;top:99.5px;width:1px;height:11px;background:#FBFAF5"></div>
<div class="tx " style="left:157.4px;top:100.5px;color:#1A1A1A">Done</div>
<svg style="left:189.5px;top:99.3px" width="13" height="13" viewBox="0 0 13 13"><path d="M6.5 .3L12.7 6.5 6.5 12.7 .3 6.5z" fill="#2A5CC8" stroke="#9CB4E8" stroke-width=".9"/><rect x="5.6" y="5.2" width="1.9" height="4.6" fill="#fff"/><circle cx="6.5" cy="3.6" r="1" fill="#fff"/></svg>
<div class="tx " style="left:213.7px;top:100.5px;color:#1A1A1A">Info</div>
<div class="tx " style="left:380px;top:100.5px;color:#1A1A1A">Name</div>
<div class="tx " style="left:562.7px;top:100.5px;color:#1A1A1A">Priority</div>
<div class="tx " style="left:621px;top:100.5px;color:#1A1A1A">Due Date&amp;Time</div>
<div class="tx " style="left:703.4px;top:100.5px;color:#1A1A1A">Status</div>
<div class="tx " style="left:751px;top:100.5px;color:#1A1A1A">Complete</div>
<div class="tx " style="left:801px;top:100.5px;color:#1A1A1A">Category</div>
<svg style="left:850.5px;top:101px" width="7" height="7" viewBox="0 0 7 7"><path d="M3.5 .5L6.5 6.5H.5z" fill="none" stroke="#B0B0A0" stroke-width="1"/></svg>
<div class="a" style="left:542.8px;top:100px;width:11px;height:10px;background:#C6D4F5;border-radius:1px"></div>
<svg style="left:542.8px;top:100px" width="11" height="10" viewBox="0 0 11 10"><path d="M3 3.5l2.5 2.5 2.5-2.5" stroke="#2A3E70" stroke-width="1.5" fill="none"/></svg>
<div class="a" style="left:593.5px;top:100px;width:11px;height:10px;background:#C6D4F5;border-radius:1px"></div>
<svg style="left:593.5px;top:100px" width="11" height="10" viewBox="0 0 11 10"><path d="M3 3.5l2.5 2.5 2.5-2.5" stroke="#2A3E70" stroke-width="1.5" fill="none"/></svg>
<div class="a" style="left:734.8px;top:100px;width:11px;height:10px;background:#C6D4F5;border-radius:1px"></div>
<svg style="left:734.8px;top:100px" width="11" height="10" viewBox="0 0 11 10"><path d="M3 3.5l2.5 2.5 2.5-2.5" stroke="#2A3E70" stroke-width="1.5" fill="none"/></svg>
<div class="a" style="left:149px;top:112px;width:713px;height:647.5px;overflow:hidden">
<div class="a" style="left:0px;top:0.0px;width:712px;height:14.44px;background:#ECE9D8"></div>
<div class="a" style="left:2px;top:3.6px;width:9px;height:9px;background:linear-gradient(#fff,#E4E4DC);border:1px solid #8EA2C4;border-radius:1px"></div>
<div class="a" style="left:4px;top:7.6px;width:5px;height:1.1px;background:#000"></div>
<div class="tx " style="left:13.7px;top:2.9px;color:#111">Category : 5. MONDAY</div>
<div class="a" style="left:11px;top:14.44px;width:701px;height:17.6px;background:#fff"></div>
<div class="a" style="left:19px;top:18.44px;width:11px;height:11px;background:linear-gradient(135deg,#DCDCD4,#FFFFFF);border:1px solid #5A78B0"></div>
<svg style="left:76.3px;top:17.14px" width="14" height="14" viewBox="0 0 14 14"><path d="M2.2 12.6L4 6.6 6.8 9.2 10.2 9.4 11.2 11.6 5 13.2z" fill="#E2EAF8" stroke="#98AAD2" stroke-width=".8"/><path d="M.7 11.6L1.5 4.2C1.9 2 3 .6 5 .4L7.9.3 12.9 6.2 9.8 8.3 6.8 8.9 4.3 7 1.9 12.2z" fill="#2EA22E" stroke="#26302A" stroke-width=".75" stroke-dasharray="1.2 .8"/><circle cx="6.6" cy="3.6" r=".7" fill="#D8F0D8"/></svg>
<div class="a" style="left:92px;top:14.44px;width:315px;height:17.6px;overflow:hidden">
<div class="tx " style="left:-0.4px;top:2.8px;color:#111">Defrost your turkey (if it's frozen).</div>
</div>
<svg style="left:409.9px;top:16.74px" width="13" height="13" viewBox="0 0 13 13"><circle cx="6.6" cy="6.6" r="4.5" fill="none" stroke="#D8600E" stroke-width="4.2"/><path d="M2.2 7.2A4.5 4.5 0 0 1 6.2 2.2" stroke="#FFB030" stroke-width="2.4" fill="none"/><path d="M3.2 4.6l1.4.9M5 3l.8 1.3" stroke="#FFF4C0" stroke-width="1"/><circle cx="6.6" cy="6.6" r="2.3" fill="#fff"/></svg>
<div class="tx " style="left:427px;top:17.24px;color:#111">Normal</div>
<div class="tx " style="left:462.5px;top:17.24px;color:#111">21.11.2005 16:01:47</div>
<svg style="left:549.6px;top:16.84px" width="12" height="13" viewBox="0 0 12 13"><path d="M.8 .8h7.2l3 3v8.6H.8z" fill="url(#dg)" stroke="#94B0E4" stroke-width="1"/><path d="M8 .8v3h3" fill="#6A90E8" stroke="#5A80D8" stroke-width=".8"/></svg>
<div class="tx " style="left:564.7px;top:18.04px;color:#111">Created</div>
<div class="tx " style="left:612.4px;top:18.04px;color:#111">0 %</div>
<svg style="left:642px;top:17.04px" width="13" height="14" viewBox="0 0 13 14"><path d="M1.3 .5v12.5" stroke="#404858" stroke-width="1.6"/><path d="M2 .8c2-.6 3 .2 4.5 0s3-.5 4.5 0v6.8c-1.5.6-3 .3-4.5 .8S3.5 8 2 8z" fill="#8A9CF6"/><path d="M6 .6v7.6" stroke="#2A3CC8" stroke-width="1.8"/><path d="M11 .6v7.2" stroke="#2A3CC8" stroke-width="1.3"/><path d="M2.5 1.5v6" stroke="#4A62E0" stroke-width="1"/></svg>
<div class="a" style="left:658px;top:14.44px;width:52.5px;height:17.6px;overflow:hidden">
<div class="tx " style="left:0.3px;top:2.8px;color:#111">5. MONDAY</div>
</div>
<div class="a" style="left:11px;top:32.04px;width:701px;height:25.55px;background:#fff"></div>
<div class="tx " style="left:29px;top:35.24px;color:#0A0AF5;white-space:pre"> Remember that you have to allow 24 hours for every 5 pounds if you're going to defrost a turkey in the refrigerator. That means a 15-pound turkey will take three full days, so get</div>
<div class="tx " style="left:29px;top:45.54px;color:#0A0AF5;white-space:pre">started on Monday. If you choose to prepare a fresh turkey, purchase it one to three days before Thanksgiving and store it in the fridge until time to cook.</div>
<div class="a" style="left:11px;top:57.59px;width:701px;height:17.6px;background:#fff"></div>
<div class="a" style="left:19px;top:61.59px;width:11px;height:11px;background:linear-gradient(135deg,#DCDCD4,#FFFFFF);border:1px solid #5A78B0"></div>
<svg style="left:76.3px;top:60.29px" width="14" height="14" viewBox="0 0 14 14"><path d="M2.2 12.6L4 6.6 6.8 9.2 10.2 9.4 11.2 11.6 5 13.2z" fill="#E2EAF8" stroke="#98AAD2" stroke-width=".8"/><path d="M.7 11.6L1.5 4.2C1.9 2 3 .6 5 .4L7.9.3 12.9 6.2 9.8 8.3 6.8 8.9 4.3 7 1.9 12.2z" fill="#2EA22E" stroke="#26302A" stroke-width=".75" stroke-dasharray="1.2 .8"/><circle cx="6.6" cy="3.6" r=".7" fill="#D8F0D8"/></svg>
<div class="a" style="left:92px;top:57.59px;width:315px;height:17.6px;overflow:hidden">
<div class="tx " style="left:-0.4px;top:2.8px;color:#111">SUGGESTION</div>
</div>
<svg style="left:409.9px;top:59.89px" width="13" height="13" viewBox="0 0 13 13"><circle cx="6.6" cy="6.6" r="4.5" fill="none" stroke="#D8600E" stroke-width="4.2"/><path d="M2.2 7.2A4.5 4.5 0 0 1 6.2 2.2" stroke="#FFB030" stroke-width="2.4" fill="none"/><path d="M3.2 4.6l1.4.9M5 3l.8 1.3" stroke="#FFF4C0" stroke-width="1"/><circle cx="6.6" cy="6.6" r="2.3" fill="#fff"/></svg>
<div class="tx " style="left:427px;top:60.39px;color:#111">Normal</div>
<div class="tx " style="left:462.5px;top:60.39px;color:#111">21.11.2005 16:01:47</div>
<svg style="left:549.6px;top:59.99px" width="12" height="13" viewBox="0 0 12 13"><path d="M.8 .8h7.2l3 3v8.6H.8z" fill="url(#dg)" stroke="#94B0E4" stroke-width="1"/><path d="M8 .8v3h3" fill="#6A90E8" stroke="#5A80D8" stroke-width=".8"/></svg>
<div class="tx " style="left:564.7px;top:61.19px;color:#111">Created</div>
<div class="tx " style="left:612.4px;top:61.19px;color:#111">0 %</div>
<svg style="left:642px;top:60.19px" width="13" height="14" viewBox="0 0 13 14"><path d="M1.3 .5v12.5" stroke="#404858" stroke-width="1.6"/><path d="M2 .8c2-.6 3 .2 4.5 0s3-.5 4.5 0v6.8c-1.5.6-3 .3-4.5 .8S3.5 8 2 8z" fill="#8A9CF6"/><path d="M6 .6v7.6" stroke="#2A3CC8" stroke-width="1.8"/><path d="M11 .6v7.2" stroke="#2A3CC8" stroke-width="1.3"/><path d="M2.5 1.5v6" stroke="#4A62E0" stroke-width="1"/></svg>
<div class="a" style="left:658px;top:57.59px;width:52.5px;height:17.6px;overflow:hidden">
<div class="tx " style="left:0.3px;top:2.8px;color:#111">5. MONDAY</div>
</div>
<div class="a" style="left:11px;top:75.19px;width:701px;height:25.55px;background:#fff"></div>
<div class="tx " style="left:29px;top:78.39px;color:#0A0AF5;white-space:pre">If you miss that deadline, you can defrost the bird faster in a sinkful of cold water, allowing about half an hour for each pound of turkey and changing the water occasionally. (It will</div>
<div class="tx " style="left:29px;top:88.69px;color:#0A0AF5;white-space:pre">still take 7 1/2 hours for that 15-pounder, so do it after work on Wednesday, then refrigerate it.)</div>
<div class="a" style="left:0px;top:100.74px;width:712px;height:14.44px;background:#ECE9D8"></div>
<div class="a" style="left:2px;top:104.34px;width:9px;height:9px;background:linear-gradient(#fff,#E4E4DC);border:1px solid #8EA2C4;border-radius:1px"></div>
<div class="a" style="left:4px;top:108.34px;width:5px;height:1.1px;background:#000"></div>
<div class="tx " style="left:13.7px;top:103.64px;color:#111">Category : 6. TUESDAY</div>
<div class="a" style="left:11px;top:115.18px;width:701px;height:17.6px;background:#fff"></div>
<div class="a" style="left:19px;top:119.18px;width:11px;height:11px;background:linear-gradient(135deg,#DCDCD4,#FFFFFF);border:1px solid #5A78B0"></div>
<div class="a" style="left:92px;top:115.18px;width:315px;height:17.6px;overflow:hidden">
<div class="tx " style="left:-0.4px;top:2.8px;color:#111">Do your final food shopping.</div>
</div>
<svg style="left:409.9px;top:117.48px" width="13" height="13" viewBox="0 0 13 13"><circle cx="6.6" cy="6.6" r="4.5" fill="none" stroke="#D8600E" stroke-width="4.2"/><path d="M2.2 7.2A4.5 4.5 0 0 1 6.2 2.2" stroke="#FFB030" stroke-width="2.4" fill="none"/><path d="M3.2 4.6l1.4.9M5 3l.8 1.3" stroke="#FFF4C0" stroke-width="1"/><circle cx="6.6" cy="6.6" r="2.3" fill="#fff"/></svg>
<div class="tx " style="left:427px;top:117.98px;color:#111">Normal</div>
<div class="tx " style="left:462.5px;top:117.98px;color:#111">22.11.2005 16:01:56</div>
<svg style="left:549.6px;top:117.58px" width="12" height="13" viewBox="0 0 12 13"><path d="M.8 .8h7.2l3 3v8.6H.8z" fill="url(#dg)" stroke="#94B0E4" stroke-width="1"/><path d="M8 .8v3h3" fill="#6A90E8" stroke="#5A80D8" stroke-width=".8"/></svg>
<div class="tx " style="left:564.7px;top:118.78px;color:#111">Created</div>
<div class="tx " style="left:612.4px;top:118.78px;color:#111">0 %</div>
<svg style="left:642px;top:117.78px" width="14" height="13" viewBox="0 0 14 13"><path d="M6.8 3C7.8 .6 11.8 0 13 2.3s.2 5.4-2.6 5.8C9 8.3 7.8 7.6 7 6.4z" fill="#FCE69A" stroke="#F0A818" stroke-width="1.4"/><circle cx="10.4" cy="3" r="1" fill="#D04010"/><path d="M7.8 6.2L1.5 11.8" stroke="#F0A818" stroke-width="2.8"/><path d="M2.6 9.6l1.8 1.8" stroke="#F0A818" stroke-width="1.6"/></svg>
<div class="a" style="left:658px;top:115.18px;width:52.5px;height:17.6px;overflow:hidden">
<div class="tx " style="left:0.3px;top:2.8px;color:#111">6. TUESDAY</div>
</div>
<div class="a" style="left:11px;top:132.78px;width:701px;height:17.6px;background:#fff"></div>
<div class="a" style="left:19px;top:136.78px;width:11px;height:11px;background:linear-gradient(135deg,#DCDCD4,#FFFFFF);border:1px solid #5A78B0"></div>
<svg style="left:76.3px;top:135.48px" width="14" height="14" viewBox="0 0 14 14"><path d="M2.2 12.6L4 6.6 6.8 9.2 10.2 9.4 11.2 11.6 5 13.2z" fill="#E2EAF8" stroke="#98AAD2" stroke-width=".8"/><path d="M.7 11.6L1.5 4.2C1.9 2 3 .6 5 .4L7.9.3 12.9 6.2 9.8 8.3 6.8 8.9 4.3 7 1.9 12.2z" fill="#2EA22E" stroke="#26302A" stroke-width=".75" stroke-dasharray="1.2 .8"/><circle cx="6.6" cy="3.6" r=".7" fill="#D8F0D8"/></svg>
<div class="a" style="left:92px;top:132.78px;width:315px;height:17.6px;overflow:hidden">
<div class="tx " style="left:-0.4px;top:2.8px;color:#111">Make a cooking schedule for Thanksgiving Day.</div>
</div>
<svg style="left:409.9px;top:135.08px" width="13" height="13" viewBox="0 0 13 13"><circle cx="6.6" cy="6.6" r="4.5" fill="none" stroke="#D8600E" stroke-width="4.2"/><path d="M2.2 7.2A4.5 4.5 0 0 1 6.2 2.2" stroke="#FFB030" stroke-width="2.4" fill="none"/><path d="M3.2 4.6l1.4.9M5 3l.8 1.3" stroke="#FFF4C0" stroke-width="1"/><circle cx="6.6" cy="6.6" r="2.3" fill="#fff"/></svg>
<div class="tx " style="left:427px;top:135.58px;color:#111">Normal</div>
<div class="tx " style="left:462.5px;top:135.58px;color:#111">22.11.2005 16:01:56</div>
<svg style="left:549.6px;top:135.18px" width="12" height="13" viewBox="0 0 12 13"><path d="M.8 .8h7.2l3 3v8.6H.8z" fill="url(#dg)" stroke="#94B0E4" stroke-width="1"/><path d="M8 .8v3h3" fill="#6A90E8" stroke="#5A80D8" stroke-width=".8"/></svg>
<div class="tx " style="left:564.7px;top:136.38px;color:#111">Created</div>
<div class="tx " style="left:612.4px;top:136.38px;color:#111">0 %</div>
<svg style="left:642px;top:135.38px" width="14" height="13" viewBox="0 0 14 13"><path d="M6.8 3C7.8 .6 11.8 0 13 2.3s.2 5.4-2.6 5.8C9 8.3 7.8 7.6 7 6.4z" fill="#FCE69A" stroke="#F0A818" stroke-width="1.4"/><circle cx="10.4" cy="3" r="1" fill="#D04010"/><path d="M7.8 6.2L1.5 11.8" stroke="#F0A818" stroke-width="2.8"/><path d="M2.6 9.6l1.8 1.8" stroke="#F0A818" stroke-width="1.6"/></svg>
<div class="a" style="left:658px;top:132.78px;width:52.5px;height:17.6px;overflow:hidden">
<div class="tx " style="left:0.3px;top:2.8px;color:#111">6. TUESDAY</div>
</div>
<div class="a" style="left:11px;top:150.38px;width:701px;height:25.55px;background:#fff"></div>
<div class="tx " style="left:29px;top:153.58px;color:#0A0AF5;white-space:pre"> If guests are invited for 5 P.M., count backward from a 6 P.M. dinner, writing down the time everything goes into the oven or the microwave. Don't forget the dishes that will have to</div>
<div class="tx " style="left:29px;top:163.88px;color:#0A0AF5;white-space:pre">be reheated.</div>
<div class="a" style="left:11px;top:175.93px;width:701px;height:17.6px;background:#fff"></div>
<div class="a" style="left:19px;top:179.93px;width:11px;height:11px;background:linear-gradient(135deg,#DCDCD4,#FFFFFF);border:1px solid #5A78B0"></div>
<svg style="left:76.3px;top:178.63px" width="14" height="14" viewBox="0 0 14 14"><path d="M2.2 12.6L4 6.6 6.8 9.2 10.2 9.4 11.2 11.6 5 13.2z" fill="#E2EAF8" stroke="#98AAD2" stroke-width=".8"/><path d="M.7 11.6L1.5 4.2C1.9 2 3 .6 5 .4L7.9.3 12.9 6.2 9.8 8.3 6.8 8.9 4.3 7 1.9 12.2z" fill="#2EA22E" stroke="#26302A" stroke-width=".75" stroke-dasharray="1.2 .8"/><circle cx="6.6" cy="3.6" r=".7" fill="#D8F0D8"/></svg>
<div class="a" style="left:92px;top:175.93px;width:315px;height:17.6px;overflow:hidden">
<div class="tx " style="left:-0.4px;top:2.8px;color:#111">Prepare and freeze appropriate side dishes and desserts.</div>
</div>
<svg style="left:409.9px;top:178.23px" width="13" height="13" viewBox="0 0 13 13"><circle cx="6.6" cy="6.6" r="4.5" fill="none" stroke="#D8600E" stroke-width="4.2"/><path d="M2.2 7.2A4.5 4.5 0 0 1 6.2 2.2" stroke="#FFB030" stroke-width="2.4" fill="none"/><path d="M3.2 4.6l1.4.9M5 3l.8 1.3" stroke="#FFF4C0" stroke-width="1"/><circle cx="6.6" cy="6.6" r="2.3" fill="#fff"/></svg>
<div class="tx " style="left:427px;top:178.73px;color:#111">Normal</div>
<div class="tx " style="left:462.5px;top:178.73px;color:#111">22.11.2005 16:01:56</div>
<svg style="left:549.6px;top:178.33px" width="12" height="13" viewBox="0 0 12 13"><path d="M.8 .8h7.2l3 3v8.6H.8z" fill="url(#dg)" stroke="#94B0E4" stroke-width="1"/><path d="M8 .8v3h3" fill="#6A90E8" stroke="#5A80D8" stroke-width=".8"/></svg>
<div class="tx " style="left:564.7px;top:179.53px;color:#111">Created</div>
<div class="tx " style="left:612.4px;top:179.53px;color:#111">0 %</div>
<svg style="left:642px;top:178.53px" width="14" height="13" viewBox="0 0 14 13"><path d="M6.8 3C7.8 .6 11.8 0 13 2.3s.2 5.4-2.6 5.8C9 8.3 7.8 7.6 7 6.4z" fill="#FCE69A" stroke="#F0A818" stroke-width="1.4"/><circle cx="10.4" cy="3" r="1" fill="#D04010"/><path d="M7.8 6.2L1.5 11.8" stroke="#F0A818" stroke-width="2.8"/><path d="M2.6 9.6l1.8 1.8" stroke="#F0A818" stroke-width="1.6"/></svg>
<div class="a" style="left:658px;top:175.93px;width:52.5px;height:17.6px;overflow:hidden">
<div class="tx " style="left:0.3px;top:2.8px;color:#111">6. TUESDAY</div>
</div>
<div class="a" style="left:11px;top:193.53px;width:701px;height:15.24px;background:#fff"></div>
<div class="tx " style="left:29px;top:196.73px;color:#0A0AF5;white-space:pre"> Don't forget to thaw out the breads and biscuits you made earlier this month.</div>
<div class="a" style="left:0px;top:208.77px;width:712px;height:14.44px;background:#ECE9D8"></div>
<div class="a" style="left:2px;top:212.37px;width:9px;height:9px;background:linear-gradient(#fff,#E4E4DC);border:1px solid #8EA2C4;border-radius:1px"></div>
<div class="a" style="left:4px;top:216.37px;width:5px;height:1.1px;background:#000"></div>
<div class="tx " style="left:13.7px;top:211.67px;color:#111">Category : 7. WEDNESDAY</div>
<div class="a" style="left:11px;top:223.21px;width:701px;height:17.6px;background:#fff"></div>
<div class="a" style="left:19px;top:227.21px;width:11px;height:11px;background:linear-gradient(135deg,#DCDCD4,#FFFFFF);border:1px solid #5A78B0"></div>
<div class="a" style="left:92px;top:223.21px;width:315px;height:17.6px;overflow:hidden">
<div class="tx " style="left:-0.4px;top:2.8px;color:#111">Set the table.</div>
</div>
<svg style="left:409.9px;top:225.51px" width="13" height="13" viewBox="0 0 13 13"><circle cx="6.6" cy="6.6" r="4.5" fill="none" stroke="#D8600E" stroke-width="4.2"/><path d="M2.2 7.2A4.5 4.5 0 0 1 6.2 2.2" stroke="#FFB030" stroke-width="2.4" fill="none"/><path d="M3.2 4.6l1.4.9M5 3l.8 1.3" stroke="#FFF4C0" stroke-width="1"/><circle cx="6.6" cy="6.6" r="2.3" fill="#fff"/></svg>
<div class="tx " style="left:427px;top:226.01px;color:#111">Normal</div>
<div class="tx " style="left:462.5px;top:226.01px;color:#111">23.11.2005 16:02:05</div>
<svg style="left:549.6px;top:225.61px" width="12" height="13" viewBox="0 0 12 13"><path d="M.8 .8h7.2l3 3v8.6H.8z" fill="url(#dg)" stroke="#94B0E4" stroke-width="1"/><path d="M8 .8v3h3" fill="#6A90E8" stroke="#5A80D8" stroke-width=".8"/></svg>
<div class="tx " style="left:564.7px;top:226.81px;color:#111">Created</div>
<div class="tx " style="left:612.4px;top:226.81px;color:#111">0 %</div>
<svg style="left:642px;top:225.81px" width="13" height="12" viewBox="0 0 13 12"><path d="M12.5 .5H5.5L3.5 3.5 5 4 3 6.5 .5 11.5 6.5 6.5 8 5 7 4.3 9.5 2.8z" fill="#2E5CE0"/><path d="M6 2.5l1 2.5" stroke="#fff" stroke-width="1.2"/><path d="M1 11l5-4.5" stroke="#0A2AB0" stroke-width="1.5"/></svg>
<div class="a" style="left:658px;top:223.21px;width:52.5px;height:17.6px;overflow:hidden">
<div class="tx " style="left:0.3px;top:2.8px;color:#111">7. WEDNESDAY</div>
</div>
<div class="a" style="left:11px;top:240.81px;width:701px;height:17.6px;background:#fff"></div>
<div class="a" style="left:19px;top:244.81px;width:11px;height:11px;background:linear-gradient(135deg,#DCDCD4,#FFFFFF);border:1px solid #5A78B0"></div>
<div class="a" style="left:92px;top:240.81px;width:315px;height:17.6px;overflow:hidden">
<div class="tx " style="left:-0.4px;top:2.8px;color:#111">Clear out the coat closet for guest coats.</div>
</div>
<svg style="left:409.9px;top:243.11px" width="13" height="13" viewBox="0 0 13 13"><circle cx="6.6" cy="6.6" r="4.5" fill="none" stroke="#D8600E" stroke-width="4.2"/><path d="M2.2 7.2A4.5 4.5 0 0 1 6.2 2.2" stroke="#FFB030" stroke-width="2.4" fill="none"/><path d="M3.2 4.6l1.4.9M5 3l.8 1.3" stroke="#FFF4C0" stroke-width="1"/><circle cx="6.6" cy="6.6" r="2.3" fill="#fff"/></svg>
<div class="tx " style="left:427px;top:243.61px;color:#111">Normal</div>
<div class="tx " style="left:462.5px;top:243.61px;color:#111">23.11.2005 16:02:05</div>
<svg style="left:549.6px;top:243.21px" width="12" height="13" viewBox="0 0 12 13"><path d="M.8 .8h7.2l3 3v8.6H.8z" fill="url(#dg)" stroke="#94B0E4" stroke-width="1"/><path d="M8 .8v3h3" fill="#6A90E8" stroke="#5A80D8" stroke-width=".8"/></svg>
<div class="tx " style="left:564.7px;top:244.41px;color:#111">Created</div>
<div class="tx " style="left:612.4px;top:244.41px;color:#111">0 %</div>
<svg style="left:642px;top:243.41px" width="13" height="12" viewBox="0 0 13 12"><path d="M12.5 .5H5.5L3.5 3.5 5 4 3 6.5 .5 11.5 6.5 6.5 8 5 7 4.3 9.5 2.8z" fill="#2E5CE0"/><path d="M6 2.5l1 2.5" stroke="#fff" stroke-width="1.2"/><path d="M1 11l5-4.5" stroke="#0A2AB0" stroke-width="1.5"/></svg>
<div class="a" style="left:658px;top:240.81px;width:52.5px;height:17.6px;overflow:hidden">
<div class="tx " style="left:0.3px;top:2.8px;color:#111">7. WEDNESDAY</div>
</div>
<div class="a" style="left:11px;top:258.41px;width:701px;height:17.6px;background:#fff"></div>
<div class="a" style="left:19px;top:262.41px;width:11px;height:11px;background:linear-gradient(135deg,#DCDCD4,#FFFFFF);border:1px solid #5A78B0"></div>
<svg style="left:76.3px;top:261.11px" width="14" height="14" viewBox="0 0 14 14"><path d="M2.2 12.6L4 6.6 6.8 9.2 10.2 9.4 11.2 11.6 5 13.2z" fill="#E2EAF8" stroke="#98AAD2" stroke-width=".8"/><path d="M.7 11.6L1.5 4.2C1.9 2 3 .6 5 .4L7.9.3 12.9 6.2 9.8 8.3 6.8 8.9 4.3 7 1.9 12.2z" fill="#2EA22E" stroke="#26302A" stroke-width=".75" stroke-dasharray="1.2 .8"/><circle cx="6.6" cy="3.6" r=".7" fill="#D8F0D8"/></svg>
<div class="a" style="left:92px;top:258.41px;width:315px;height:17.6px;overflow:hidden">
<div class="tx " style="left:-0.4px;top:2.8px;color:#111">Clean the guest bathroom.</div>
</div>
<svg style="left:409.9px;top:260.71px" width="13" height="13" viewBox="0 0 13 13"><circle cx="6.6" cy="6.6" r="4.5" fill="none" stroke="#D8600E" stroke-width="4.2"/><path d="M2.2 7.2A4.5 4.5 0 0 1 6.2 2.2" stroke="#FFB030" stroke-width="2.4" fill="none"/><path d="M3.2 4.6l1.4.9M5 3l.8 1.3" stroke="#FFF4C0" stroke-width="1"/><circle cx="6.6" cy="6.6" r="2.3" fill="#fff"/></svg>
<div class="tx " style="left:427px;top:261.21px;color:#111">Normal</div>
<div class="tx " style="left:462.5px;top:261.21px;color:#111">23.11.2005 16:02:05</div>
<svg style="left:549.6px;top:260.81px" width="12" height="13" viewBox="0 0 12 13"><path d="M.8 .8h7.2l3 3v8.6H.8z" fill="url(#dg)" stroke="#94B0E4" stroke-width="1"/><path d="M8 .8v3h3" fill="#6A90E8" stroke="#5A80D8" stroke-width=".8"/></svg>
<div class="tx " style="left:564.7px;top:262.01px;color:#111">Created</div>
<div class="tx " style="left:612.4px;top:262.01px;color:#111">0 %</div>
<svg style="left:642px;top:261.01px" width="13" height="12" viewBox="0 0 13 12"><path d="M12.5 .5H5.5L3.5 3.5 5 4 3 6.5 .5 11.5 6.5 6.5 8 5 7 4.3 9.5 2.8z" fill="#2E5CE0"/><path d="M6 2.5l1 2.5" stroke="#fff" stroke-width="1.2"/><path d="M1 11l5-4.5" stroke="#0A2AB0" stroke-width="1.5"/></svg>
<div class="a" style="left:658px;top:258.41px;width:52.5px;height:17.6px;overflow:hidden">
<div class="tx " style="left:0.3px;top:2.8px;color:#111">7. WEDNESDAY</div>
</div>
<div class="a" style="left:11px;top:276.01px;width:701px;height:15.24px;background:#fff"></div>
<div class="tx " style="left:29px;top:279.21px;color:#0A0AF5;white-space:pre"> If possible, make it off-limits to the family.</div>
<div class="a" style="left:11px;top:291.25px;width:701px;height:17.6px;background:#fff"></div>
<div class="a" style="left:19px;top:295.25px;width:11px;height:11px;background:linear-gradient(135deg,#DCDCD4,#FFFFFF);border:1px solid #5A78B0"></div>
<div class="a" style="left:92px;top:291.25px;width:315px;height:17.6px;overflow:hidden">
<div class="tx " style="left:-0.4px;top:2.8px;color:#111">Take the gravy out of the freezer and put it in the refrigerator so it can defrost.</div>
</div>
<svg style="left:409.9px;top:293.55px" width="13" height="13" viewBox="0 0 13 13"><circle cx="6.6" cy="6.6" r="4.5" fill="none" stroke="#D8600E" stroke-width="4.2"/><path d="M2.2 7.2A4.5 4.5 0 0 1 6.2 2.2" stroke="#FFB030" stroke-width="2.4" fill="none"/><path d="M3.2 4.6l1.4.9M5 3l.8 1.3" stroke="#FFF4C0" stroke-width="1"/><circle cx="6.6" cy="6.6" r="2.3" fill="#fff"/></svg>
<div class="tx " style="left:427px;top:294.05px;color:#111">Normal</div>
<div class="tx " style="left:462.5px;top:294.05px;color:#111">23.11.2005 16:02:05</div>
<svg style="left:549.6px;top:293.65px" width="12" height="13" viewBox="0 0 12 13"><path d="M.8 .8h7.2l3 3v8.6H.8z" fill="url(#dg)" stroke="#94B0E4" stroke-width="1"/><path d="M8 .8v3h3" fill="#6A90E8" stroke="#5A80D8" stroke-width=".8"/></svg>
<div class="tx " style="left:564.7px;top:294.85px;color:#111">Created</div>
<div class="tx " style="left:612.4px;top:294.85px;color:#111">0 %</div>
<svg style="left:642px;top:293.85px" width="13" height="12" viewBox="0 0 13 12"><path d="M12.5 .5H5.5L3.5 3.5 5 4 3 6.5 .5 11.5 6.5 6.5 8 5 7 4.3 9.5 2.8z" fill="#2E5CE0"/><path d="M6 2.5l1 2.5" stroke="#fff" stroke-width="1.2"/><path d="M1 11l5-4.5" stroke="#0A2AB0" stroke-width="1.5"/></svg>
<div class="a" style="left:658px;top:291.25px;width:52.5px;height:17.6px;overflow:hidden">
<div class="tx " style="left:0.3px;top:2.8px;color:#111">7. WEDNESDAY</div>
</div>
<div class="a" style="left:11px;top:308.85px;width:701px;height:17.6px;background:#fff"></div>
<div class="a" style="left:19px;top:312.85px;width:11px;height:11px;background:linear-gradient(135deg,#DCDCD4,#FFFFFF);border:1px solid #5A78B0"></div>
<svg style="left:76.3px;top:311.55px" width="14" height="14" viewBox="0 0 14 14"><path d="M2.2 12.6L4 6.6 6.8 9.2 10.2 9.4 11.2 11.6 5 13.2z" fill="#E2EAF8" stroke="#98AAD2" stroke-width=".8"/><path d="M.7 11.6L1.5 4.2C1.9 2 3 .6 5 .4L7.9.3 12.9 6.2 9.8 8.3 6.8 8.9 4.3 7 1.9 12.2z" fill="#2EA22E" stroke="#26302A" stroke-width=".75" stroke-dasharray="1.2 .8"/><circle cx="6.6" cy="3.6" r=".7" fill="#D8F0D8"/></svg>
<div class="a" style="left:92px;top:308.85px;width:315px;height:17.6px;overflow:hidden">
<div class="tx " style="left:-0.4px;top:2.8px;color:#111">Decide on a table centerpiece.</div>
</div>
<svg style="left:409.9px;top:311.15px" width="13" height="13" viewBox="0 0 13 13"><circle cx="6.6" cy="6.6" r="4.5" fill="none" stroke="#D8600E" stroke-width="4.2"/><path d="M2.2 7.2A4.5 4.5 0 0 1 6.2 2.2" stroke="#FFB030" stroke-width="2.4" fill="none"/><path d="M3.2 4.6l1.4.9M5 3l.8 1.3" stroke="#FFF4C0" stroke-width="1"/><circle cx="6.6" cy="6.6" r="2.3" fill="#fff"/></svg>
<div class="tx " style="left:427px;top:311.65px;color:#111">Normal</div>
<div class="tx " style="left:462.5px;top:311.65px;color:#111">23.11.2005 16:02:05</div>
<svg style="left:549.6px;top:311.25px" width="12" height="13" viewBox="0 0 12 13"><path d="M.8 .8h7.2l3 3v8.6H.8z" fill="url(#dg)" stroke="#94B0E4" stroke-width="1"/><path d="M8 .8v3h3" fill="#6A90E8" stroke="#5A80D8" stroke-width=".8"/></svg>
<div class="tx " style="left:564.7px;top:312.45px;color:#111">Created</div>
<div class="tx " style="left:612.4px;top:312.45px;color:#111">0 %</div>
<svg style="left:642px;top:311.45px" width="13" height="12" viewBox="0 0 13 12"><path d="M12.5 .5H5.5L3.5 3.5 5 4 3 6.5 .5 11.5 6.5 6.5 8 5 7 4.3 9.5 2.8z" fill="#2E5CE0"/><path d="M6 2.5l1 2.5" stroke="#fff" stroke-width="1.2"/><path d="M1 11l5-4.5" stroke="#0A2AB0" stroke-width="1.5"/></svg>
<div class="a" style="left:658px;top:308.85px;width:52.5px;height:17.6px;overflow:hidden">
<div class="tx " style="left:0.3px;top:2.8px;color:#111">7. WEDNESDAY</div>
</div>
<div class="a" style="left:11px;top:326.45px;width:701px;height:25.55px;background:#fff"></div>
<div class="tx " style="left:29px;top:329.65px;color:#0A0AF5;white-space:pre"> Flowers or collections of candles work well. Line votive candles down the center so the entire table is aglow. Since it's fall, you could also try an arrangement of seasonal fruits and</div>
<div class="tx " style="left:29px;top:339.95px;color:#0A0AF5;white-space:pre">vegetables. Place pumpkins, gourds and wheat around the house for decorative touches.</div>
<div class="a" style="left:11px;top:352.0px;width:701px;height:17.6px;background:#fff"></div>
<div class="a" style="left:19px;top:356.0px;width:11px;height:11px;background:linear-gradient(135deg,#DCDCD4,#FFFFFF);border:1px solid #5A78B0"></div>
<svg style="left:76.3px;top:354.7px" width="14" height="14" viewBox="0 0 14 14"><path d="M2.2 12.6L4 6.6 6.8 9.2 10.2 9.4 11.2 11.6 5 13.2z" fill="#E2EAF8" stroke="#98AAD2" stroke-width=".8"/><path d="M.7 11.6L1.5 4.2C1.9 2 3 .6 5 .4L7.9.3 12.9 6.2 9.8 8.3 6.8 8.9 4.3 7 1.9 12.2z" fill="#2EA22E" stroke="#26302A" stroke-width=".75" stroke-dasharray="1.2 .8"/><circle cx="6.6" cy="3.6" r=".7" fill="#D8F0D8"/></svg>
<div class="a" style="left:92px;top:352.0px;width:315px;height:17.6px;overflow:hidden">
<div class="tx " style="left:-0.4px;top:2.8px;color:#111">Prepare yourself, too.</div>
</div>
<svg style="left:409.9px;top:354.3px" width="13" height="13" viewBox="0 0 13 13"><circle cx="6.6" cy="6.6" r="4.5" fill="none" stroke="#D8600E" stroke-width="4.2"/><path d="M2.2 7.2A4.5 4.5 0 0 1 6.2 2.2" stroke="#FFB030" stroke-width="2.4" fill="none"/><path d="M3.2 4.6l1.4.9M5 3l.8 1.3" stroke="#FFF4C0" stroke-width="1"/><circle cx="6.6" cy="6.6" r="2.3" fill="#fff"/></svg>
<div class="tx " style="left:427px;top:354.8px;color:#111">Normal</div>
<div class="tx " style="left:462.5px;top:354.8px;color:#111">23.11.2005 16:02:05</div>
<svg style="left:549.6px;top:354.4px" width="12" height="13" viewBox="0 0 12 13"><path d="M.8 .8h7.2l3 3v8.6H.8z" fill="url(#dg)" stroke="#94B0E4" stroke-width="1"/><path d="M8 .8v3h3" fill="#6A90E8" stroke="#5A80D8" stroke-width=".8"/></svg>
<div class="tx " style="left:564.7px;top:355.6px;color:#111">Created</div>
<div class="tx " style="left:612.4px;top:355.6px;color:#111">0 %</div>
<svg style="left:642px;top:354.6px" width="13" height="12" viewBox="0 0 13 12"><path d="M12.5 .5H5.5L3.5 3.5 5 4 3 6.5 .5 11.5 6.5 6.5 8 5 7 4.3 9.5 2.8z" fill="#2E5CE0"/><path d="M6 2.5l1 2.5" stroke="#fff" stroke-width="1.2"/><path d="M1 11l5-4.5" stroke="#0A2AB0" stroke-width="1.5"/></svg>
<div class="a" style="left:658px;top:352.0px;width:52.5px;height:17.6px;overflow:hidden">
<div class="tx " style="left:0.3px;top:2.8px;color:#111">7. WEDNESDAY</div>
</div>
<div class="a" style="left:11px;top:369.6px;width:701px;height:25.55px;background:#fff"></div>
<div class="tx " style="left:29px;top:372.8px;color:#0A0AF5;white-space:pre"> Today's a good day to decide what to wear and to mentally take yourself through Thanksgiving Day. Don't worry about potential mishaps. Remember that the important thing is that</div>
<div class="tx " style="left:29px;top:383.1px;color:#0A0AF5;white-space:pre">family and friends are together.</div>
<div class="a" style="left:11px;top:395.15px;width:701px;height:17.6px;background:#fff"></div>
<div class="a" style="left:19px;top:399.15px;width:11px;height:11px;background:linear-gradient(135deg,#DCDCD4,#FFFFFF);border:1px solid #5A78B0"></div>
<svg style="left:76.3px;top:397.85px" width="14" height="14" viewBox="0 0 14 14"><path d="M2.2 12.6L4 6.6 6.8 9.2 10.2 9.4 11.2 11.6 5 13.2z" fill="#E2EAF8" stroke="#98AAD2" stroke-width=".8"/><path d="M.7 11.6L1.5 4.2C1.9 2 3 .6 5 .4L7.9.3 12.9 6.2 9.8 8.3 6.8 8.9 4.3 7 1.9 12.2z" fill="#2EA22E" stroke="#26302A" stroke-width=".75" stroke-dasharray="1.2 .8"/><circle cx="6.6" cy="3.6" r=".7" fill="#D8F0D8"/></svg>
<div class="a" style="left:92px;top:395.15px;width:315px;height:17.6px;overflow:hidden">
<div class="tx " style="left:-0.4px;top:2.8px;color:#111">Prepare and refrigerate moist ingredients for the stuffing.</div>
</div>
<svg style="left:409.9px;top:397.45px" width="13" height="13" viewBox="0 0 13 13"><circle cx="6.6" cy="6.6" r="4.5" fill="none" stroke="#D8600E" stroke-width="4.2"/><path d="M2.2 7.2A4.5 4.5 0 0 1 6.2 2.2" stroke="#FFB030" stroke-width="2.4" fill="none"/><path d="M3.2 4.6l1.4.9M5 3l.8 1.3" stroke="#FFF4C0" stroke-width="1"/><circle cx="6.6" cy="6.6" r="2.3" fill="#fff"/></svg>
<div class="tx " style="left:427px;top:397.95px;color:#111">Normal</div>
<div class="tx " style="left:462.5px;top:397.95px;color:#111">23.11.2005 16:02:05</div>
<svg style="left:549.6px;top:397.55px" width="12" height="13" viewBox="0 0 12 13"><path d="M.8 .8h7.2l3 3v8.6H.8z" fill="url(#dg)" stroke="#94B0E4" stroke-width="1"/><path d="M8 .8v3h3" fill="#6A90E8" stroke="#5A80D8" stroke-width=".8"/></svg>
<div class="tx " style="left:564.7px;top:398.75px;color:#111">Created</div>
<div class="tx " style="left:612.4px;top:398.75px;color:#111">0 %</div>
<svg style="left:642px;top:397.75px" width="13" height="12" viewBox="0 0 13 12"><path d="M12.5 .5H5.5L3.5 3.5 5 4 3 6.5 .5 11.5 6.5 6.5 8 5 7 4.3 9.5 2.8z" fill="#2E5CE0"/><path d="M6 2.5l1 2.5" stroke="#fff" stroke-width="1.2"/><path d="M1 11l5-4.5" stroke="#0A2AB0" stroke-width="1.5"/></svg>
<div class="a" style="left:658px;top:395.15px;width:52.5px;height:17.6px;overflow:hidden">
<div class="tx " style="left:0.3px;top:2.8px;color:#111">7. WEDNESDAY</div>
</div>
<div class="a" style="left:11px;top:412.75px;width:701px;height:15.24px;background:#fff"></div>
<div class="tx " style="left:29px;top:415.95px;color:#0A0AF5;white-space:pre">Store dry ingredients in a separate container. Thaw pie dough and bake the pie. Set your beautiful table with elegant folded napkins.</div>
<div class="a" style="left:0px;top:427.99px;width:712px;height:14.44px;background:#ECE9D8"></div>
<div class="a" style="left:2px;top:431.59px;width:9px;height:9px;background:linear-gradient(#fff,#E4E4DC);border:1px solid #8EA2C4;border-radius:1px"></div>
<div class="a" style="left:4px;top:435.59px;width:5px;height:1.1px;background:#000"></div>
<div class="tx " style="left:13.7px;top:430.89px;color:#111">Category : 8. THANKSGIVING DAY</div>
<div class="a" style="left:11px;top:442.43px;width:701px;height:17.6px;background:#fff"></div>
<div class="a" style="left:19px;top:446.43px;width:11px;height:11px;background:linear-gradient(135deg,#DCDCD4,#FFFFFF);border:1px solid #5A78B0"></div>
<svg style="left:76.3px;top:445.13px" width="14" height="14" viewBox="0 0 14 14"><path d="M2.2 12.6L4 6.6 6.8 9.2 10.2 9.4 11.2 11.6 5 13.2z" fill="#E2EAF8" stroke="#98AAD2" stroke-width=".8"/><path d="M.7 11.6L1.5 4.2C1.9 2 3 .6 5 .4L7.9.3 12.9 6.2 9.8 8.3 6.8 8.9 4.3 7 1.9 12.2z" fill="#2EA22E" stroke="#26302A" stroke-width=".75" stroke-dasharray="1.2 .8"/><circle cx="6.6" cy="3.6" r=".7" fill="#D8F0D8"/></svg>
<div class="a" style="left:92px;top:442.43px;width:315px;height:17.6px;overflow:hidden">
<div class="tx " style="left:-0.4px;top:2.8px;color:#111">Don't forget breakfast.</div>
</div>
<svg style="left:410.9px;top:444.93px" width="12" height="12" viewBox="0 0 12 12"><rect x=".2" y=".2" width="11.5" height="11.5" rx="1.2" fill="#E2680E"/><path d="M3.2 5.6l2.8-2.6 2.8 2.6M3.2 9l2.8-2.6 2.8 2.6" stroke="#fff" stroke-width="1.5" fill="none"/></svg>
<div class="tx " style="left:427px;top:445.23px;color:#111">Highest</div>
<div class="tx " style="left:462.5px;top:445.23px;color:#111">24.11.2005 16:02:15</div>
<svg style="left:549.6px;top:444.83px" width="12" height="13" viewBox="0 0 12 13"><path d="M.8 .8h7.2l3 3v8.6H.8z" fill="url(#dg)" stroke="#94B0E4" stroke-width="1"/><path d="M8 .8v3h3" fill="#6A90E8" stroke="#5A80D8" stroke-width=".8"/></svg>
<div class="tx " style="left:564.7px;top:446.03px;color:#111">Created</div>
<div class="tx " style="left:612.4px;top:446.03px;color:#111">0 %</div>
<svg style="left:642px;top:445.03px" width="14" height="14" viewBox="0 0 14 14"><circle cx="7" cy="7" r="6.4" fill="#F4B424"/><path d="M2 5.5A5.5 5.5 0 0 1 7 1.2" stroke="#FFEEA0" stroke-width="1.5" fill="none"/><rect x="3.5" y="4" width="2" height="2" fill="#1A3A4A"/><rect x="7.8" y="4" width="2" height="2" fill="#1A3A4A"/><path d="M3.6 7.5h6.4v1.5c-1 2-5.4 2-6.4 0z" fill="#1C2C3C"/><rect x="3.8" y="7.3" width="6" height="1.3" fill="#30A030"/><circle cx="7.5" cy="10" r=".9" fill="#2050E0"/></svg>
<div class="a" style="left:658px;top:442.43px;width:52.5px;height:17.6px;overflow:hidden">
<div class="tx " style="left:0.3px;top:2.8px;color:#111">8. THANKSGIVING DAY</div>
</div>
<div class="a" style="left:11px;top:460.03px;width:701px;height:15.24px;background:#fff"></div>
<div class="tx " style="left:29px;top:463.23px;color:#0A0AF5;white-space:pre">Your family will be happier sitting down to an afternoon feast if their stomachs aren't completely empty.</div>
<div class="a" style="left:11px;top:475.27px;width:701px;height:17.6px;background:#fff"></div>
<div class="a" style="left:19px;top:479.27px;width:11px;height:11px;background:linear-gradient(135deg,#DCDCD4,#FFFFFF);border:1px solid #5A78B0"></div>
<div class="a" style="left:92px;top:475.27px;width:315px;height:17.6px;overflow:hidden">
<div class="tx " style="left:-0.4px;top:2.8px;color:#111">Make the stuffing in the morning and stuff the turkey right before it's ready to go in the oven.</div>
</div>
<svg style="left:409.9px;top:477.57px" width="13" height="13" viewBox="0 0 13 13"><circle cx="6.6" cy="6.6" r="4.5" fill="none" stroke="#D8600E" stroke-width="4.2"/><path d="M2.2 7.2A4.5 4.5 0 0 1 6.2 2.2" stroke="#FFB030" stroke-width="2.4" fill="none"/><path d="M3.2 4.6l1.4.9M5 3l.8 1.3" stroke="#FFF4C0" stroke-width="1"/><circle cx="6.6" cy="6.6" r="2.3" fill="#fff"/></svg>
<div class="tx " style="left:427px;top:478.07px;color:#111">Normal</div>
<div class="tx " style="left:462.5px;top:478.07px;color:#111">24.11.2005 16:02:15</div>
<svg style="left:549.6px;top:477.67px" width="12" height="13" viewBox="0 0 12 13"><path d="M.8 .8h7.2l3 3v8.6H.8z" fill="url(#dg)" stroke="#94B0E4" stroke-width="1"/><path d="M8 .8v3h3" fill="#6A90E8" stroke="#5A80D8" stroke-width=".8"/></svg>
<div class="tx " style="left:564.7px;top:478.87px;color:#111">Created</div>
<div class="tx " style="left:612.4px;top:478.87px;color:#111">0 %</div>
<svg style="left:642px;top:477.87px" width="14" height="14" viewBox="0 0 14 14"><circle cx="7" cy="7" r="6.4" fill="#F4B424"/><path d="M2 5.5A5.5 5.5 0 0 1 7 1.2" stroke="#FFEEA0" stroke-width="1.5" fill="none"/><rect x="3.5" y="4" width="2" height="2" fill="#1A3A4A"/><rect x="7.8" y="4" width="2" height="2" fill="#1A3A4A"/><path d="M3.6 7.5h6.4v1.5c-1 2-5.4 2-6.4 0z" fill="#1C2C3C"/><rect x="3.8" y="7.3" width="6" height="1.3" fill="#30A030"/><circle cx="7.5" cy="10" r=".9" fill="#2050E0"/></svg>
<div class="a" style="left:658px;top:475.27px;width:52.5px;height:17.6px;overflow:hidden">
<div class="tx " style="left:0.3px;top:2.8px;color:#111">8. THANKSGIVING DAY</div>
</div>
<div class="a" style="left:11px;top:492.87px;width:701px;height:17.6px;background:#fff"></div>
<div class="a" style="left:19px;top:496.87px;width:11px;height:11px;background:linear-gradient(135deg,#DCDCD4,#FFFFFF);border:1px solid #5A78B0"></div>
<svg style="left:76.3px;top:495.57px" width="14" height="14" viewBox="0 0 14 14"><path d="M2.2 12.6L4 6.6 6.8 9.2 10.2 9.4 11.2 11.6 5 13.2z" fill="#E2EAF8" stroke="#98AAD2" stroke-width=".8"/><path d="M.7 11.6L1.5 4.2C1.9 2 3 .6 5 .4L7.9.3 12.9 6.2 9.8 8.3 6.8 8.9 4.3 7 1.9 12.2z" fill="#2EA22E" stroke="#26302A" stroke-width=".75" stroke-dasharray="1.2 .8"/><circle cx="6.6" cy="3.6" r=".7" fill="#D8F0D8"/></svg>
<div class="a" style="left:92px;top:492.87px;width:315px;height:17.6px;overflow:hidden">
<div class="tx " style="left:-0.4px;top:2.8px;color:#111">Enlist helpers to set the table before guests arrive.</div>
</div>
<svg style="left:409.9px;top:495.17px" width="13" height="13" viewBox="0 0 13 13"><circle cx="6.6" cy="6.6" r="4.5" fill="none" stroke="#D8600E" stroke-width="4.2"/><path d="M2.2 7.2A4.5 4.5 0 0 1 6.2 2.2" stroke="#FFB030" stroke-width="2.4" fill="none"/><path d="M3.2 4.6l1.4.9M5 3l.8 1.3" stroke="#FFF4C0" stroke-width="1"/><circle cx="6.6" cy="6.6" r="2.3" fill="#fff"/></svg>
<div class="tx " style="left:427px;top:495.67px;color:#111">Normal</div>
<div class="tx " style="left:462.5px;top:495.67px;color:#111">24.11.2005 16:02:15</div>
<svg style="left:549.6px;top:495.27px" width="12" height="13" viewBox="0 0 12 13"><path d="M.8 .8h7.2l3 3v8.6H.8z" fill="url(#dg)" stroke="#94B0E4" stroke-width="1"/><path d="M8 .8v3h3" fill="#6A90E8" stroke="#5A80D8" stroke-width=".8"/></svg>
<div class="tx " style="left:564.7px;top:496.47px;color:#111">Created</div>
<div class="tx " style="left:612.4px;top:496.47px;color:#111">0 %</div>
<svg style="left:642px;top:495.47px" width="14" height="14" viewBox="0 0 14 14"><circle cx="7" cy="7" r="6.4" fill="#F4B424"/><path d="M2 5.5A5.5 5.5 0 0 1 7 1.2" stroke="#FFEEA0" stroke-width="1.5" fill="none"/><rect x="3.5" y="4" width="2" height="2" fill="#1A3A4A"/><rect x="7.8" y="4" width="2" height="2" fill="#1A3A4A"/><path d="M3.6 7.5h6.4v1.5c-1 2-5.4 2-6.4 0z" fill="#1C2C3C"/><rect x="3.8" y="7.3" width="6" height="1.3" fill="#30A030"/><circle cx="7.5" cy="10" r=".9" fill="#2050E0"/></svg>
<div class="a" style="left:658px;top:492.87px;width:52.5px;height:17.6px;overflow:hidden">
<div class="tx " style="left:0.3px;top:2.8px;color:#111">8. THANKSGIVING DAY</div>
</div>
<div class="a" style="left:11px;top:510.47px;width:701px;height:25.55px;background:#fff"></div>
<div class="tx " style="left:29px;top:513.67px;color:#0A0AF5;white-space:pre"> Those who are not setting the table can arrange the vegetable plate or other pre-dinner platters. Encourage reluctant children (and adults) to pitch in by announcing that the worst</div>
<div class="tx " style="left:29px;top:523.97px;color:#0A0AF5;white-space:pre">sourpuss will have to scrub the turkey pan at the end of the night.</div>
<div class="a" style="left:11px;top:536.02px;width:701px;height:17.6px;background:#fff"></div>
<div class="a" style="left:19px;top:540.02px;width:11px;height:11px;background:linear-gradient(135deg,#DCDCD4,#FFFFFF);border:1px solid #5A78B0"></div>
<svg style="left:76.3px;top:538.72px" width="14" height="14" viewBox="0 0 14 14"><path d="M2.2 12.6L4 6.6 6.8 9.2 10.2 9.4 11.2 11.6 5 13.2z" fill="#E2EAF8" stroke="#98AAD2" stroke-width=".8"/><path d="M.7 11.6L1.5 4.2C1.9 2 3 .6 5 .4L7.9.3 12.9 6.2 9.8 8.3 6.8 8.9 4.3 7 1.9 12.2z" fill="#2EA22E" stroke="#26302A" stroke-width=".75" stroke-dasharray="1.2 .8"/><circle cx="6.6" cy="3.6" r=".7" fill="#D8F0D8"/></svg>
<div class="a" style="left:92px;top:536.02px;width:315px;height:17.6px;overflow:hidden">
<div class="tx " style="left:-0.4px;top:2.8px;color:#111">Remove prepared side dishes from the freezer.</div>
</div>
<svg style="left:409.9px;top:538.32px" width="13" height="13" viewBox="0 0 13 13"><circle cx="6.6" cy="6.6" r="4.5" fill="none" stroke="#D8600E" stroke-width="4.2"/><path d="M2.2 7.2A4.5 4.5 0 0 1 6.2 2.2" stroke="#FFB030" stroke-width="2.4" fill="none"/><path d="M3.2 4.6l1.4.9M5 3l.8 1.3" stroke="#FFF4C0" stroke-width="1"/><circle cx="6.6" cy="6.6" r="2.3" fill="#fff"/></svg>
<div class="tx " style="left:427px;top:538.82px;color:#111">Normal</div>
<div class="tx " style="left:462.5px;top:538.82px;color:#111">24.11.2005 16:02:15</div>
<svg style="left:549.6px;top:538.42px" width="12" height="13" viewBox="0 0 12 13"><path d="M.8 .8h7.2l3 3v8.6H.8z" fill="url(#dg)" stroke="#94B0E4" stroke-width="1"/><path d="M8 .8v3h3" fill="#6A90E8" stroke="#5A80D8" stroke-width=".8"/></svg>
<div class="tx " style="left:564.7px;top:539.62px;color:#111">Created</div>
<div class="tx " style="left:612.4px;top:539.62px;color:#111">0 %</div>
<svg style="left:642px;top:538.62px" width="14" height="14" viewBox="0 0 14 14"><circle cx="7" cy="7" r="6.4" fill="#F4B424"/><path d="M2 5.5A5.5 5.5 0 0 1 7 1.2" stroke="#FFEEA0" stroke-width="1.5" fill="none"/><rect x="3.5" y="4" width="2" height="2" fill="#1A3A4A"/><rect x="7.8" y="4" width="2" height="2" fill="#1A3A4A"/><path d="M3.6 7.5h6.4v1.5c-1 2-5.4 2-6.4 0z" fill="#1C2C3C"/><rect x="3.8" y="7.3" width="6" height="1.3" fill="#30A030"/><circle cx="7.5" cy="10" r=".9" fill="#2050E0"/></svg>
<div class="a" style="left:658px;top:536.02px;width:52.5px;height:17.6px;overflow:hidden">
<div class="tx " style="left:0.3px;top:2.8px;color:#111">8. THANKSGIVING DAY</div>
</div>
<div class="a" style="left:11px;top:553.62px;width:701px;height:15.24px;background:#fff"></div>
<div class="tx " style="left:29px;top:556.82px;color:#0A0AF5;white-space:pre"> Just before roasting the turkey, combine stuffing ingredients or place in an oven safe dish or foil.</div>
<div class="a" style="left:11px;top:568.86px;width:701px;height:17.6px;background:#fff"></div>
<div class="a" style="left:19px;top:572.86px;width:11px;height:11px;background:linear-gradient(135deg,#DCDCD4,#FFFFFF);border:1px solid #5A78B0"></div>
<div class="a" style="left:92px;top:568.86px;width:315px;height:17.6px;overflow:hidden">
<div class="tx " style="left:-0.4px;top:2.8px;color:#111">Roast the turkey.</div>
</div>
<svg style="left:409.9px;top:571.16px" width="13" height="13" viewBox="0 0 13 13"><circle cx="6.6" cy="6.6" r="4.5" fill="none" stroke="#D8600E" stroke-width="4.2"/><path d="M2.2 7.2A4.5 4.5 0 0 1 6.2 2.2" stroke="#FFB030" stroke-width="2.4" fill="none"/><path d="M3.2 4.6l1.4.9M5 3l.8 1.3" stroke="#FFF4C0" stroke-width="1"/><circle cx="6.6" cy="6.6" r="2.3" fill="#fff"/></svg>
<div class="tx " style="left:427px;top:571.66px;color:#111">Normal</div>
<div class="tx " style="left:462.5px;top:571.66px;color:#111">24.11.2005 16:02:15</div>
<svg style="left:549.6px;top:571.26px" width="12" height="13" viewBox="0 0 12 13"><path d="M.8 .8h7.2l3 3v8.6H.8z" fill="url(#dg)" stroke="#94B0E4" stroke-width="1"/><path d="M8 .8v3h3" fill="#6A90E8" stroke="#5A80D8" stroke-width=".8"/></svg>
<div class="tx " style="left:564.7px;top:572.46px;color:#111">Created</div>
<div class="tx " style="left:612.4px;top:572.46px;color:#111">0 %</div>
<svg style="left:642px;top:571.46px" width="14" height="14" viewBox="0 0 14 14"><circle cx="7" cy="7" r="6.4" fill="#F4B424"/><path d="M2 5.5A5.5 5.5 0 0 1 7 1.2" stroke="#FFEEA0" stroke-width="1.5" fill="none"/><rect x="3.5" y="4" width="2" height="2" fill="#1A3A4A"/><rect x="7.8" y="4" width="2" height="2" fill="#1A3A4A"/><path d="M3.6 7.5h6.4v1.5c-1 2-5.4 2-6.4 0z" fill="#1C2C3C"/><rect x="3.8" y="7.3" width="6" height="1.3" fill="#30A030"/><circle cx="7.5" cy="10" r=".9" fill="#2050E0"/></svg>
<div class="a" style="left:658px;top:568.86px;width:52.5px;height:17.6px;overflow:hidden">
<div class="tx " style="left:0.3px;top:2.8px;color:#111">8. THANKSGIVING DAY</div>
</div>
<div class="a" style="left:11px;top:586.46px;width:701px;height:17.6px;background:#fff"></div>
<div class="a" style="left:19px;top:590.46px;width:11px;height:11px;background:linear-gradient(135deg,#DCDCD4,#FFFFFF);border:1px solid #5A78B0"></div>
<svg style="left:76.3px;top:589.16px" width="14" height="14" viewBox="0 0 14 14"><path d="M2.2 12.6L4 6.6 6.8 9.2 10.2 9.4 11.2 11.6 5 13.2z" fill="#E2EAF8" stroke="#98AAD2" stroke-width=".8"/><path d="M.7 11.6L1.5 4.2C1.9 2 3 .6 5 .4L7.9.3 12.9 6.2 9.8 8.3 6.8 8.9 4.3 7 1.9 12.2z" fill="#2EA22E" stroke="#26302A" stroke-width=".75" stroke-dasharray="1.2 .8"/><circle cx="6.6" cy="3.6" r=".7" fill="#D8F0D8"/></svg>
<div class="a" style="left:92px;top:586.46px;width:315px;height:17.6px;overflow:hidden">
<div class="tx " style="left:-0.4px;top:2.8px;color:#111">Within two hours after roasting, remove stuffing from turkey and carve meat off bones.</div>
</div>
<svg style="left:409.9px;top:588.76px" width="13" height="13" viewBox="0 0 13 13"><circle cx="6.6" cy="6.6" r="4.5" fill="none" stroke="#D8600E" stroke-width="4.2"/><path d="M2.2 7.2A4.5 4.5 0 0 1 6.2 2.2" stroke="#FFB030" stroke-width="2.4" fill="none"/><path d="M3.2 4.6l1.4.9M5 3l.8 1.3" stroke="#FFF4C0" stroke-width="1"/><circle cx="6.6" cy="6.6" r="2.3" fill="#fff"/></svg>
<div class="tx " style="left:427px;top:589.26px;color:#111">Normal</div>
<div class="tx " style="left:462.5px;top:589.26px;color:#111">24.11.2005 16:02:15</div>
<svg style="left:549.6px;top:588.86px" width="12" height="13" viewBox="0 0 12 13"><path d="M.8 .8h7.2l3 3v8.6H.8z" fill="url(#dg)" stroke="#94B0E4" stroke-width="1"/><path d="M8 .8v3h3" fill="#6A90E8" stroke="#5A80D8" stroke-width=".8"/></svg>
<div class="tx " style="left:564.7px;top:590.06px;color:#111">Created</div>
<div class="tx " style="left:612.4px;top:590.06px;color:#111">0 %</div>
<svg style="left:642px;top:589.06px" width="14" height="14" viewBox="0 0 14 14"><circle cx="7" cy="7" r="6.4" fill="#F4B424"/><path d="M2 5.5A5.5 5.5 0 0 1 7 1.2" stroke="#FFEEA0" stroke-width="1.5" fill="none"/><rect x="3.5" y="4" width="2" height="2" fill="#1A3A4A"/><rect x="7.8" y="4" width="2" height="2" fill="#1A3A4A"/><path d="M3.6 7.5h6.4v1.5c-1 2-5.4 2-6.4 0z" fill="#1C2C3C"/><rect x="3.8" y="7.3" width="6" height="1.3" fill="#30A030"/><circle cx="7.5" cy="10" r=".9" fill="#2050E0"/></svg>
<div class="a" style="left:658px;top:586.46px;width:52.5px;height:17.6px;overflow:hidden">
<div class="tx " style="left:0.3px;top:2.8px;color:#111">8. THANKSGIVING DAY</div>
</div>
<div class="a" style="left:11px;top:604.06px;width:701px;height:15.24px;background:#fff"></div>
<div class="tx " style="left:29px;top:607.26px;color:#0A0AF5;white-space:pre"> Then, chill in refrigerator before wrapping for storage. Once chilled, wrap turkey and stuffing separately.</div>
<div class="a" style="left:11px;top:619.3px;width:701px;height:17.6px;background:#fff"></div>
<div class="a" style="left:19px;top:623.3px;width:11px;height:11px;background:linear-gradient(135deg,#DCDCD4,#FFFFFF);border:1px solid #5A78B0"></div>
<svg style="left:76.3px;top:622.0px" width="14" height="14" viewBox="0 0 14 14"><path d="M2.2 12.6L4 6.6 6.8 9.2 10.2 9.4 11.2 11.6 5 13.2z" fill="#E2EAF8" stroke="#98AAD2" stroke-width=".8"/><path d="M.7 11.6L1.5 4.2C1.9 2 3 .6 5 .4L7.9.3 12.9 6.2 9.8 8.3 6.8 8.9 4.3 7 1.9 12.2z" fill="#2EA22E" stroke="#26302A" stroke-width=".75" stroke-dasharray="1.2 .8"/><circle cx="6.6" cy="3.6" r=".7" fill="#D8F0D8"/></svg>
<div class="a" style="left:92px;top:619.3px;width:315px;height:17.6px;overflow:hidden">
<div class="tx " style="left:-0.4px;top:2.8px;color:#111">Once guests start to arrive, give each child an assignment.</div>
</div>
<svg style="left:409.9px;top:621.6px" width="13" height="13" viewBox="0 0 13 13"><circle cx="6.6" cy="6.6" r="4.5" fill="none" stroke="#D8600E" stroke-width="4.2"/><path d="M2.2 7.2A4.5 4.5 0 0 1 6.2 2.2" stroke="#FFB030" stroke-width="2.4" fill="none"/><path d="M3.2 4.6l1.4.9M5 3l.8 1.3" stroke="#FFF4C0" stroke-width="1"/><circle cx="6.6" cy="6.6" r="2.3" fill="#fff"/></svg>
<div class="tx " style="left:427px;top:622.1px;color:#111">Normal</div>
<div class="tx " style="left:462.5px;top:622.1px;color:#111">24.11.2005 16:02:15</div>
<svg style="left:549.6px;top:621.7px" width="12" height="13" viewBox="0 0 12 13"><path d="M.8 .8h7.2l3 3v8.6H.8z" fill="url(#dg)" stroke="#94B0E4" stroke-width="1"/><path d="M8 .8v3h3" fill="#6A90E8" stroke="#5A80D8" stroke-width=".8"/></svg>
<div class="tx " style="left:564.7px;top:622.9px;color:#111">Created</div>
<div class="tx " style="left:612.4px;top:622.9px;color:#111">0 %</div>
<svg style="left:642px;top:621.9px" width="14" height="14" viewBox="0 0 14 14"><circle cx="7" cy="7" r="6.4" fill="#F4B424"/><path d="M2 5.5A5.5 5.5 0 0 1 7 1.2" stroke="#FFEEA0" stroke-width="1.5" fill="none"/><rect x="3.5" y="4" width="2" height="2" fill="#1A3A4A"/><rect x="7.8" y="4" width="2" height="2" fill="#1A3A4A"/><path d="M3.6 7.5h6.4v1.5c-1 2-5.4 2-6.4 0z" fill="#1C2C3C"/><rect x="3.8" y="7.3" width="6" height="1.3" fill="#30A030"/><circle cx="7.5" cy="10" r=".9" fill="#2050E0"/></svg>
<div class="a" style="left:658px;top:619.3px;width:52.5px;height:17.6px;overflow:hidden">
<div class="tx " style="left:0.3px;top:2.8px;color:#111">8. THANKSGIVING DAY</div>
</div>
<div class="a" style="left:11px;top:636.9px;width:701px;height:15.24px;background:#fff"></div>
<div class="tx " style="left:29px;top:640.1px;color:#0A0AF5;white-space:pre"> Such as greeting the guests at the door, taking people's coats, making a new member of the family feel at home, or getting the younger kids prepared for dinner.</div>
<div class="a" style="left:0px;top:-0.5px;width:712px;height:1px;background:#C9C5B4"></div>
<div class="a" style="left:11px;top:13.94px;width:701px;height:1px;background:#C9C5B4"></div>
<div class="a" style="left:11px;top:31.54px;width:701px;height:1px;background:#C9C5B4"></div>
<div class="a" style="left:10.5px;top:14.44px;width:1px;height:17.6px;background:#C9C5B4"></div>
<div class="a" style="left:37.0px;top:14.44px;width:1px;height:17.6px;background:#C9C5B4"></div>
<div class="a" style="left:90.0px;top:14.44px;width:1px;height:17.6px;background:#C9C5B4"></div>
<div class="a" style="left:406.8px;top:14.44px;width:1px;height:17.6px;background:#C9C5B4"></div>
<div class="a" style="left:457.0px;top:14.44px;width:1px;height:17.6px;background:#C9C5B4"></div>
<div class="a" style="left:544.8px;top:14.44px;width:1px;height:17.6px;background:#C9C5B4"></div>
<div class="a" style="left:598.9px;top:14.44px;width:1px;height:17.6px;background:#C9C5B4"></div>
<div class="a" style="left:638.7px;top:14.44px;width:1px;height:17.6px;background:#C9C5B4"></div>
<div class="a" style="left:711.5px;top:14.44px;width:1px;height:17.6px;background:#C9C5B4"></div>
<div class="a" style="left:11px;top:57.09px;width:701px;height:1px;background:#C9C5B4"></div>
<div class="a" style="left:10.5px;top:32.04px;width:1px;height:25.55px;background:#C9C5B4"></div>
<div class="a" style="left:711.5px;top:32.04px;width:1px;height:25.55px;background:#C9C5B4"></div>
<div class="a" style="left:11px;top:57.09px;width:701px;height:1px;background:#C9C5B4"></div>
<div class="a" style="left:11px;top:74.69px;width:701px;height:1px;background:#C9C5B4"></div>
<div class="a" style="left:10.5px;top:57.59px;width:1px;height:17.6px;background:#C9C5B4"></div>
<div class="a" style="left:37.0px;top:57.59px;width:1px;height:17.6px;background:#C9C5B4"></div>
<div class="a" style="left:90.0px;top:57.59px;width:1px;height:17.6px;background:#C9C5B4"></div>
<div class="a" style="left:406.8px;top:57.59px;width:1px;height:17.6px;background:#C9C5B4"></div>
<div class="a" style="left:457.0px;top:57.59px;width:1px;height:17.6px;background:#C9C5B4"></div>
<div class="a" style="left:544.8px;top:57.59px;width:1px;height:17.6px;background:#C9C5B4"></div>
<div class="a" style="left:598.9px;top:57.59px;width:1px;height:17.6px;background:#C9C5B4"></div>
<div class="a" style="left:638.7px;top:57.59px;width:1px;height:17.6px;background:#C9C5B4"></div>
<div class="a" style="left:711.5px;top:57.59px;width:1px;height:17.6px;background:#C9C5B4"></div>
<div class="a" style="left:11px;top:100.24px;width:701px;height:1px;background:#C9C5B4"></div>
<div class="a" style="left:10.5px;top:75.19px;width:1px;height:25.55px;background:#C9C5B4"></div>
<div class="a" style="left:711.5px;top:75.19px;width:1px;height:25.55px;background:#C9C5B4"></div>
<div class="a" style="left:0px;top:100.24px;width:712px;height:1px;background:#C9C5B4"></div>
<div class="a" style="left:11px;top:114.68px;width:701px;height:1px;background:#C9C5B4"></div>
<div class="a" style="left:11px;top:132.28px;width:701px;height:1px;background:#C9C5B4"></div>
<div class="a" style="left:10.5px;top:115.18px;width:1px;height:17.6px;background:#C9C5B4"></div>
<div class="a" style="left:37.0px;top:115.18px;width:1px;height:17.6px;background:#C9C5B4"></div>
<div class="a" style="left:90.0px;top:115.18px;width:1px;height:17.6px;background:#C9C5B4"></div>
<div class="a" style="left:406.8px;top:115.18px;width:1px;height:17.6px;background:#C9C5B4"></div>
<div class="a" style="left:457.0px;top:115.18px;width:1px;height:17.6px;background:#C9C5B4"></div>
<div class="a" style="left:544.8px;top:115.18px;width:1px;height:17.6px;background:#C9C5B4"></div>
<div class="a" style="left:598.9px;top:115.18px;width:1px;height:17.6px;background:#C9C5B4"></div>
<div class="a" style="left:638.7px;top:115.18px;width:1px;height:17.6px;background:#C9C5B4"></div>
<div class="a" style="left:711.5px;top:115.18px;width:1px;height:17.6px;background:#C9C5B4"></div>
<div class="a" style="left:11px;top:132.28px;width:701px;height:1px;background:#C9C5B4"></div>
<div class="a" style="left:11px;top:149.88px;width:701px;height:1px;background:#C9C5B4"></div>
<div class="a" style="left:10.5px;top:132.78px;width:1px;height:17.6px;background:#C9C5B4"></div>
<div class="a" style="left:37.0px;top:132.78px;width:1px;height:17.6px;background:#C9C5B4"></div>
<div class="a" style="left:90.0px;top:132.78px;width:1px;height:17.6px;background:#C9C5B4"></div>
<div class="a" style="left:406.8px;top:132.78px;width:1px;height:17.6px;background:#C9C5B4"></div>
<div class="a" style="left:457.0px;top:132.78px;width:1px;height:17.6px;background:#C9C5B4"></div>
<div class="a" style="left:544.8px;top:132.78px;width:1px;height:17.6px;background:#C9C5B4"></div>
<div class="a" style="left:598.9px;top:132.78px;width:1px;height:17.6px;background:#C9C5B4"></div>
<div class="a" style="left:638.7px;top:132.78px;width:1px;height:17.6px;background:#C9C5B4"></div>
<div class="a" style="left:711.5px;top:132.78px;width:1px;height:17.6px;background:#C9C5B4"></div>
<div class="a" style="left:11px;top:175.43px;width:701px;height:1px;background:#C9C5B4"></div>
<div class="a" style="left:10.5px;top:150.38px;width:1px;height:25.55px;background:#C9C5B4"></div>
<div class="a" style="left:711.5px;top:150.38px;width:1px;height:25.55px;background:#C9C5B4"></div>
<div class="a" style="left:11px;top:175.43px;width:701px;height:1px;background:#C9C5B4"></div>
<div class="a" style="left:11px;top:193.03px;width:701px;height:1px;background:#C9C5B4"></div>
<div class="a" style="left:10.5px;top:175.93px;width:1px;height:17.6px;background:#C9C5B4"></div>
<div class="a" style="left:37.0px;top:175.93px;width:1px;height:17.6px;background:#C9C5B4"></div>
<div class="a" style="left:90.0px;top:175.93px;width:1px;height:17.6px;background:#C9C5B4"></div>
<div class="a" style="left:406.8px;top:175.93px;width:1px;height:17.6px;background:#C9C5B4"></div>
<div class="a" style="left:457.0px;top:175.93px;width:1px;height:17.6px;background:#C9C5B4"></div>
<div class="a" style="left:544.8px;top:175.93px;width:1px;height:17.6px;background:#C9C5B4"></div>
<div class="a" style="left:598.9px;top:175.93px;width:1px;height:17.6px;background:#C9C5B4"></div>
<div class="a" style="left:638.7px;top:175.93px;width:1px;height:17.6px;background:#C9C5B4"></div>
<div class="a" style="left:711.5px;top:175.93px;width:1px;height:17.6px;background:#C9C5B4"></div>
<div class="a" style="left:11px;top:208.27px;width:701px;height:1px;background:#C9C5B4"></div>
<div class="a" style="left:10.5px;top:193.53px;width:1px;height:15.24px;background:#C9C5B4"></div>
<div class="a" style="left:711.5px;top:193.53px;width:1px;height:15.24px;background:#C9C5B4"></div>
<div class="a" style="left:0px;top:208.27px;width:712px;height:1px;background:#C9C5B4"></div>
<div class="a" style="left:11px;top:222.71px;width:701px;height:1px;background:#C9C5B4"></div>
<div class="a" style="left:11px;top:240.31px;width:701px;height:1px;background:#C9C5B4"></div>
<div class="a" style="left:10.5px;top:223.21px;width:1px;height:17.6px;background:#C9C5B4"></div>
<div class="a" style="left:37.0px;top:223.21px;width:1px;height:17.6px;background:#C9C5B4"></div>
<div class="a" style="left:90.0px;top:223.21px;width:1px;height:17.6px;background:#C9C5B4"></div>
<div class="a" style="left:406.8px;top:223.21px;width:1px;height:17.6px;background:#C9C5B4"></div>
<div class="a" style="left:457.0px;top:223.21px;width:1px;height:17.6px;background:#C9C5B4"></div>
<div class="a" style="left:544.8px;top:223.21px;width:1px;height:17.6px;background:#C9C5B4"></div>
<div class="a" style="left:598.9px;top:223.21px;width:1px;height:17.6px;background:#C9C5B4"></div>
<div class="a" style="left:638.7px;top:223.21px;width:1px;height:17.6px;background:#C9C5B4"></div>
<div class="a" style="left:711.5px;top:223.21px;width:1px;height:17.6px;background:#C9C5B4"></div>
<div class="a" style="left:11px;top:240.31px;width:701px;height:1px;background:#C9C5B4"></div>
<div class="a" style="left:11px;top:257.91px;width:701px;height:1px;background:#C9C5B4"></div>
<div class="a" style="left:10.5px;top:240.81px;width:1px;height:17.6px;background:#C9C5B4"></div>
<div class="a" style="left:37.0px;top:240.81px;width:1px;height:17.6px;background:#C9C5B4"></div>
<div class="a" style="left:90.0px;top:240.81px;width:1px;height:17.6px;background:#C9C5B4"></div>
<div class="a" style="left:406.8px;top:240.81px;width:1px;height:17.6px;background:#C9C5B4"></div>
<div class="a" style="left:457.0px;top:240.81px;width:1px;height:17.6px;background:#C9C5B4"></div>
<div class="a" style="left:544.8px;top:240.81px;width:1px;height:17.6px;background:#C9C5B4"></div>
<div class="a" style="left:598.9px;top:240.81px;width:1px;height:17.6px;background:#C9C5B4"></div>
<div class="a" style="left:638.7px;top:240.81px;width:1px;height:17.6px;background:#C9C5B4"></div>
<div class="a" style="left:711.5px;top:240.81px;width:1px;height:17.6px;background:#C9C5B4"></div>
<div class="a" style="left:11px;top:257.91px;width:701px;height:1px;background:#C9C5B4"></div>
<div class="a" style="left:11px;top:275.51px;width:701px;height:1px;background:#C9C5B4"></div>
<div class="a" style="left:10.5px;top:258.41px;width:1px;height:17.6px;background:#C9C5B4"></div>
<div class="a" style="left:37.0px;top:258.41px;width:1px;height:17.6px;background:#C9C5B4"></div>
<div class="a" style="left:90.0px;top:258.41px;width:1px;height:17.6px;background:#C9C5B4"></div>
<div class="a" style="left:406.8px;top:258.41px;width:1px;height:17.6px;background:#C9C5B4"></div>
<div class="a" style="left:457.0px;top:258.41px;width:1px;height:17.6px;background:#C9C5B4"></div>
<div class="a" style="left:544.8px;top:258.41px;width:1px;height:17.6px;background:#C9C5B4"></div>
<div class="a" style="left:598.9px;top:258.41px;width:1px;height:17.6px;background:#C9C5B4"></div>
<div class="a" style="left:638.7px;top:258.41px;width:1px;height:17.6px;background:#C9C5B4"></div>
<div class="a" style="left:711.5px;top:258.41px;width:1px;height:17.6px;background:#C9C5B4"></div>
<div class="a" style="left:11px;top:290.75px;width:701px;height:1px;background:#C9C5B4"></div>
<div class="a" style="left:10.5px;top:276.01px;width:1px;height:15.24px;background:#C9C5B4"></div>
<div class="a" style="left:711.5px;top:276.01px;width:1px;height:15.24px;background:#C9C5B4"></div>
<div class="a" style="left:11px;top:290.75px;width:701px;height:1px;background:#C9C5B4"></div>
<div class="a" style="left:11px;top:308.35px;width:701px;height:1px;background:#C9C5B4"></div>
<div class="a" style="left:10.5px;top:291.25px;width:1px;height:17.6px;background:#C9C5B4"></div>
<div class="a" style="left:37.0px;top:291.25px;width:1px;height:17.6px;background:#C9C5B4"></div>
<div class="a" style="left:90.0px;top:291.25px;width:1px;height:17.6px;background:#C9C5B4"></div>
<div class="a" style="left:406.8px;top:291.25px;width:1px;height:17.6px;background:#C9C5B4"></div>
<div class="a" style="left:457.0px;top:291.25px;width:1px;height:17.6px;background:#C9C5B4"></div>
<div class="a" style="left:544.8px;top:291.25px;width:1px;height:17.6px;background:#C9C5B4"></div>
<div class="a" style="left:598.9px;top:291.25px;width:1px;height:17.6px;background:#C9C5B4"></div>
<div class="a" style="left:638.7px;top:291.25px;width:1px;height:17.6px;background:#C9C5B4"></div>
<div class="a" style="left:711.5px;top:291.25px;width:1px;height:17.6px;background:#C9C5B4"></div>
<div class="a" style="left:11px;top:308.35px;width:701px;height:1px;background:#C9C5B4"></div>
<div class="a" style="left:11px;top:325.95px;width:701px;height:1px;background:#C9C5B4"></div>
<div class="a" style="left:10.5px;top:308.85px;width:1px;height:17.6px;background:#C9C5B4"></div>
<div class="a" style="left:37.0px;top:308.85px;width:1px;height:17.6px;background:#C9C5B4"></div>
<div class="a" style="left:90.0px;top:308.85px;width:1px;height:17.6px;background:#C9C5B4"></div>
<div class="a" style="left:406.8px;top:308.85px;width:1px;height:17.6px;background:#C9C5B4"></div>
<div class="a" style="left:457.0px;top:308.85px;width:1px;height:17.6px;background:#C9C5B4"></div>
<div class="a" style="left:544.8px;top:308.85px;width:1px;height:17.6px;background:#C9C5B4"></div>
<div class="a" style="left:598.9px;top:308.85px;width:1px;height:17.6px;background:#C9C5B4"></div>
<div class="a" style="left:638.7px;top:308.85px;width:1px;height:17.6px;background:#C9C5B4"></div>
<div class="a" style="left:711.5px;top:308.85px;width:1px;height:17.6px;background:#C9C5B4"></div>
<div class="a" style="left:11px;top:351.5px;width:701px;height:1px;background:#C9C5B4"></div>
<div class="a" style="left:10.5px;top:326.45px;width:1px;height:25.55px;background:#C9C5B4"></div>
<div class="a" style="left:711.5px;top:326.45px;width:1px;height:25.55px;background:#C9C5B4"></div>
<div class="a" style="left:11px;top:351.5px;width:701px;height:1px;background:#C9C5B4"></div>
<div class="a" style="left:11px;top:369.1px;width:701px;height:1px;background:#C9C5B4"></div>
<div class="a" style="left:10.5px;top:352.0px;width:1px;height:17.6px;background:#C9C5B4"></div>
<div class="a" style="left:37.0px;top:352.0px;width:1px;height:17.6px;background:#C9C5B4"></div>
<div class="a" style="left:90.0px;top:352.0px;width:1px;height:17.6px;background:#C9C5B4"></div>
<div class="a" style="left:406.8px;top:352.0px;width:1px;height:17.6px;background:#C9C5B4"></div>
<div class="a" style="left:457.0px;top:352.0px;width:1px;height:17.6px;background:#C9C5B4"></div>
<div class="a" style="left:544.8px;top:352.0px;width:1px;height:17.6px;background:#C9C5B4"></div>
<div class="a" style="left:598.9px;top:352.0px;width:1px;height:17.6px;background:#C9C5B4"></div>
<div class="a" style="left:638.7px;top:352.0px;width:1px;height:17.6px;background:#C9C5B4"></div>
<div class="a" style="left:711.5px;top:352.0px;width:1px;height:17.6px;background:#C9C5B4"></div>
<div class="a" style="left:11px;top:394.65px;width:701px;height:1px;background:#C9C5B4"></div>
<div class="a" style="left:10.5px;top:369.6px;width:1px;height:25.55px;background:#C9C5B4"></div>
<div class="a" style="left:711.5px;top:369.6px;width:1px;height:25.55px;background:#C9C5B4"></div>
<div class="a" style="left:11px;top:394.65px;width:701px;height:1px;background:#C9C5B4"></div>
<div class="a" style="left:11px;top:412.25px;width:701px;height:1px;background:#C9C5B4"></div>
<div class="a" style="left:10.5px;top:395.15px;width:1px;height:17.6px;background:#C9C5B4"></div>
<div class="a" style="left:37.0px;top:395.15px;width:1px;height:17.6px;background:#C9C5B4"></div>
<div class="a" style="left:90.0px;top:395.15px;width:1px;height:17.6px;background:#C9C5B4"></div>
<div class="a" style="left:406.8px;top:395.15px;width:1px;height:17.6px;background:#C9C5B4"></div>
<div class="a" style="left:457.0px;top:395.15px;width:1px;height:17.6px;background:#C9C5B4"></div>
<div class="a" style="left:544.8px;top:395.15px;width:1px;height:17.6px;background:#C9C5B4"></div>
<div class="a" style="left:598.9px;top:395.15px;width:1px;height:17.6px;background:#C9C5B4"></div>
<div class="a" style="left:638.7px;top:395.15px;width:1px;height:17.6px;background:#C9C5B4"></div>
<div class="a" style="left:711.5px;top:395.15px;width:1px;height:17.6px;background:#C9C5B4"></div>
<div class="a" style="left:11px;top:427.49px;width:701px;height:1px;background:#C9C5B4"></div>
<div class="a" style="left:10.5px;top:412.75px;width:1px;height:15.24px;background:#C9C5B4"></div>
<div class="a" style="left:711.5px;top:412.75px;width:1px;height:15.24px;background:#C9C5B4"></div>
<div class="a" style="left:0px;top:427.49px;width:712px;height:1px;background:#C9C5B4"></div>
<div class="a" style="left:11px;top:441.93px;width:701px;height:1px;background:#C9C5B4"></div>
<div class="a" style="left:11px;top:459.53px;width:701px;height:1px;background:#C9C5B4"></div>
<div class="a" style="left:10.5px;top:442.43px;width:1px;height:17.6px;background:#C9C5B4"></div>
<div class="a" style="left:37.0px;top:442.43px;width:1px;height:17.6px;background:#C9C5B4"></div>
<div class="a" style="left:90.0px;top:442.43px;width:1px;height:17.6px;background:#C9C5B4"></div>
<div class="a" style="left:406.8px;top:442.43px;width:1px;height:17.6px;background:#C9C5B4"></div>
<div class="a" style="left:457.0px;top:442.43px;width:1px;height:17.6px;background:#C9C5B4"></div>
<div class="a" style="left:544.8px;top:442.43px;width:1px;height:17.6px;background:#C9C5B4"></div>
<div class="a" style="left:598.9px;top:442.43px;width:1px;height:17.6px;background:#C9C5B4"></div>
<div class="a" style="left:638.7px;top:442.43px;width:1px;height:17.6px;background:#C9C5B4"></div>
<div class="a" style="left:711.5px;top:442.43px;width:1px;height:17.6px;background:#C9C5B4"></div>
<div class="a" style="left:11px;top:474.77px;width:701px;height:1px;background:#C9C5B4"></div>
<div class="a" style="left:10.5px;top:460.03px;width:1px;height:15.24px;background:#C9C5B4"></div>
<div class="a" style="left:711.5px;top:460.03px;width:1px;height:15.24px;background:#C9C5B4"></div>
<div class="a" style="left:11px;top:474.77px;width:701px;height:1px;background:#C9C5B4"></div>
<div class="a" style="left:11px;top:492.37px;width:701px;height:1px;background:#C9C5B4"></div>
<div class="a" style="left:10.5px;top:475.27px;width:1px;height:17.6px;background:#C9C5B4"></div>
<div class="a" style="left:37.0px;top:475.27px;width:1px;height:17.6px;background:#C9C5B4"></div>
<div class="a" style="left:90.0px;top:475.27px;width:1px;height:17.6px;background:#C9C5B4"></div>
<div class="a" style="left:406.8px;top:475.27px;width:1px;height:17.6px;background:#C9C5B4"></div>
<div class="a" style="left:457.0px;top:475.27px;width:1px;height:17.6px;background:#C9C5B4"></div>
<div class="a" style="left:544.8px;top:475.27px;width:1px;height:17.6px;background:#C9C5B4"></div>
<div class="a" style="left:598.9px;top:475.27px;width:1px;height:17.6px;background:#C9C5B4"></div>
<div class="a" style="left:638.7px;top:475.27px;width:1px;height:17.6px;background:#C9C5B4"></div>
<div class="a" style="left:711.5px;top:475.27px;width:1px;height:17.6px;background:#C9C5B4"></div>
<div class="a" style="left:11px;top:492.37px;width:701px;height:1px;background:#C9C5B4"></div>
<div class="a" style="left:11px;top:509.97px;width:701px;height:1px;background:#C9C5B4"></div>
<div class="a" style="left:10.5px;top:492.87px;width:1px;height:17.6px;background:#C9C5B4"></div>
<div class="a" style="left:37.0px;top:492.87px;width:1px;height:17.6px;background:#C9C5B4"></div>
<div class="a" style="left:90.0px;top:492.87px;width:1px;height:17.6px;background:#C9C5B4"></div>
<div class="a" style="left:406.8px;top:492.87px;width:1px;height:17.6px;background:#C9C5B4"></div>
<div class="a" style="left:457.0px;top:492.87px;width:1px;height:17.6px;background:#C9C5B4"></div>
<div class="a" style="left:544.8px;top:492.87px;width:1px;height:17.6px;background:#C9C5B4"></div>
<div class="a" style="left:598.9px;top:492.87px;width:1px;height:17.6px;background:#C9C5B4"></div>
<div class="a" style="left:638.7px;top:492.87px;width:1px;height:17.6px;background:#C9C5B4"></div>
<div class="a" style="left:711.5px;top:492.87px;width:1px;height:17.6px;background:#C9C5B4"></div>
<div class="a" style="left:11px;top:535.52px;width:701px;height:1px;background:#C9C5B4"></div>
<div class="a" style="left:10.5px;top:510.47px;width:1px;height:25.55px;background:#C9C5B4"></div>
<div class="a" style="left:711.5px;top:510.47px;width:1px;height:25.55px;background:#C9C5B4"></div>
<div class="a" style="left:11px;top:535.52px;width:701px;height:1px;background:#C9C5B4"></div>
<div class="a" style="left:11px;top:553.12px;width:701px;height:1px;background:#C9C5B4"></div>
<div class="a" style="left:10.5px;top:536.02px;width:1px;height:17.6px;background:#C9C5B4"></div>
<div class="a" style="left:37.0px;top:536.02px;width:1px;height:17.6px;background:#C9C5B4"></div>
<div class="a" style="left:90.0px;top:536.02px;width:1px;height:17.6px;background:#C9C5B4"></div>
<div class="a" style="left:406.8px;top:536.02px;width:1px;height:17.6px;background:#C9C5B4"></div>
<div class="a" style="left:457.0px;top:536.02px;width:1px;height:17.6px;background:#C9C5B4"></div>
<div class="a" style="left:544.8px;top:536.02px;width:1px;height:17.6px;background:#C9C5B4"></div>
<div class="a" style="left:598.9px;top:536.02px;width:1px;height:17.6px;background:#C9C5B4"></div>
<div class="a" style="left:638.7px;top:536.02px;width:1px;height:17.6px;background:#C9C5B4"></div>
<div class="a" style="left:711.5px;top:536.02px;width:1px;height:17.6px;background:#C9C5B4"></div>
<div class="a" style="left:11px;top:568.36px;width:701px;height:1px;background:#C9C5B4"></div>
<div class="a" style="left:10.5px;top:553.62px;width:1px;height:15.24px;background:#C9C5B4"></div>
<div class="a" style="left:711.5px;top:553.62px;width:1px;height:15.24px;background:#C9C5B4"></div>
<div class="a" style="left:11px;top:568.36px;width:701px;height:1px;background:#C9C5B4"></div>
<div class="a" style="left:11px;top:585.96px;width:701px;height:1px;background:#C9C5B4"></div>
<div class="a" style="left:10.5px;top:568.86px;width:1px;height:17.6px;background:#C9C5B4"></div>
<div class="a" style="left:37.0px;top:568.86px;width:1px;height:17.6px;background:#C9C5B4"></div>
<div class="a" style="left:90.0px;top:568.86px;width:1px;height:17.6px;background:#C9C5B4"></div>
<div class="a" style="left:406.8px;top:568.86px;width:1px;height:17.6px;background:#C9C5B4"></div>
<div class="a" style="left:457.0px;top:568.86px;width:1px;height:17.6px;background:#C9C5B4"></div>
<div class="a" style="left:544.8px;top:568.86px;width:1px;height:17.6px;background:#C9C5B4"></div>
<div class="a" style="left:598.9px;top:568.86px;width:1px;height:17.6px;background:#C9C5B4"></div>
<div class="a" style="left:638.7px;top:568.86px;width:1px;height:17.6px;background:#C9C5B4"></div>
<div class="a" style="left:711.5px;top:568.86px;width:1px;height:17.6px;background:#C9C5B4"></div>
<div class="a" style="left:11px;top:585.96px;width:701px;height:1px;background:#C9C5B4"></div>
<div class="a" style="left:11px;top:603.56px;width:701px;height:1px;background:#C9C5B4"></div>
<div class="a" style="left:10.5px;top:586.46px;width:1px;height:17.6px;background:#C9C5B4"></div>
<div class="a" style="left:37.0px;top:586.46px;width:1px;height:17.6px;background:#C9C5B4"></div>
<div class="a" style="left:90.0px;top:586.46px;width:1px;height:17.6px;background:#C9C5B4"></div>
<div class="a" style="left:406.8px;top:586.46px;width:1px;height:17.6px;background:#C9C5B4"></div>
<div class="a" style="left:457.0px;top:586.46px;width:1px;height:17.6px;background:#C9C5B4"></div>
<div class="a" style="left:544.8px;top:586.46px;width:1px;height:17.6px;background:#C9C5B4"></div>
<div class="a" style="left:598.9px;top:586.46px;width:1px;height:17.6px;background:#C9C5B4"></div>
<div class="a" style="left:638.7px;top:586.46px;width:1px;height:17.6px;background:#C9C5B4"></div>
<div class="a" style="left:711.5px;top:586.46px;width:1px;height:17.6px;background:#C9C5B4"></div>
<div class="a" style="left:11px;top:618.8px;width:701px;height:1px;background:#C9C5B4"></div>
<div class="a" style="left:10.5px;top:604.06px;width:1px;height:15.24px;background:#C9C5B4"></div>
<div class="a" style="left:711.5px;top:604.06px;width:1px;height:15.24px;background:#C9C5B4"></div>
<div class="a" style="left:11px;top:618.8px;width:701px;height:1px;background:#C9C5B4"></div>
<div class="a" style="left:11px;top:636.4px;width:701px;height:1px;background:#C9C5B4"></div>
<div class="a" style="left:10.5px;top:619.3px;width:1px;height:17.6px;background:#C9C5B4"></div>
<div class="a" style="left:37.0px;top:619.3px;width:1px;height:17.6px;background:#C9C5B4"></div>
<div class="a" style="left:90.0px;top:619.3px;width:1px;height:17.6px;background:#C9C5B4"></div>
<div class="a" style="left:406.8px;top:619.3px;width:1px;height:17.6px;background:#C9C5B4"></div>
<div class="a" style="left:457.0px;top:619.3px;width:1px;height:17.6px;background:#C9C5B4"></div>
<div class="a" style="left:544.8px;top:619.3px;width:1px;height:17.6px;background:#C9C5B4"></div>
<div class="a" style="left:598.9px;top:619.3px;width:1px;height:17.6px;background:#C9C5B4"></div>
<div class="a" style="left:638.7px;top:619.3px;width:1px;height:17.6px;background:#C9C5B4"></div>
<div class="a" style="left:711.5px;top:619.3px;width:1px;height:17.6px;background:#C9C5B4"></div>
<div class="a" style="left:11px;top:651.64px;width:701px;height:1px;background:#C9C5B4"></div>
<div class="a" style="left:10.5px;top:636.9px;width:1px;height:15.24px;background:#C9C5B4"></div>
<div class="a" style="left:711.5px;top:636.9px;width:1px;height:15.24px;background:#C9C5B4"></div>
</div>
<div class="a" style="left:149px;top:759.5px;width:712px;height:19.5px;background:#ECE9D8;border-top:1px solid #C9C5B4"></div>
<div class="a" style="left:240.5px;top:761px;width:314px;height:17.5px;background:#F5F1EA;border-left:1px solid #B8B4A4;border-top:1px solid #B0AC9C;border-bottom:1px solid #FFFFFF"></div>
<div class="tx " style="left:244px;top:764.6px;color:#111;font-size:10.5px;transform:scaleX(.9)">67</div>
<div class="a" style="left:861px;top:70px;width:14.5px;height:709.5px;background:#F4F4EF;border-left:1px solid #EAE8DE"></div>
<div class="a" style="left:875px;top:70px;width:1px;height:710px;background:#8DA2C4"></div>
<div class="a" style="left:862.8px;top:70px;width:11px;height:11.5px;background:linear-gradient(#DCE6FC,#BCCCF4);border-radius:2px;border:1px solid #C6D4F4"></div>
<svg style="left:862.8px;top:70px" width="11" height="11.5" viewBox="0 0 11 11.5"><path d="M3 7l2.5-2.5L8 7" stroke="#4D6185" stroke-width="1.6" fill="none"/></svg>
<div class="a" style="left:862.8px;top:767.3px;width:11px;height:11.5px;background:linear-gradient(#DCE6FC,#BCCCF4);border-radius:2px;border:1px solid #C6D4F4"></div>
<svg style="left:862.8px;top:767.3px" width="11" height="11.5" viewBox="0 0 11 11.5"><path d="M3 4.5L5.5 7 8 4.5" stroke="#4D6185" stroke-width="1.6" fill="none"/></svg>
<div class="a" style="left:862.8px;top:524.5px;width:11px;height:196.5px;background:linear-gradient(90deg,#C8D5F8,#C2D0F6 70%,#B3C5F2);border-radius:2px"></div>
<div class="a" style="left:866px;top:618.5px;width:5px;height:1px;background:#E8EEFC"></div>
<div class="a" style="left:866px;top:619.5px;width:5px;height:0.8px;background:#9CB0E0"></div>
<div class="a" style="left:866px;top:620.5px;width:5px;height:1px;background:#E8EEFC"></div>
<div class="a" style="left:866px;top:621.5px;width:5px;height:0.8px;background:#9CB0E0"></div>
<div class="a" style="left:866px;top:622.5px;width:5px;height:1px;background:#E8EEFC"></div>
<div class="a" style="left:866px;top:623.5px;width:5px;height:0.8px;background:#9CB0E0"></div>
<div class="a" style="left:866px;top:624.5px;width:5px;height:1px;background:#E8EEFC"></div>
<div class="a" style="left:866px;top:625.5px;width:5px;height:0.8px;background:#9CB0E0"></div>
<div class="a" style="left:148px;top:780px;width:729px;height:22.5px;background:linear-gradient(#FAFAF6,#F0EEE6)"></div>
<div class="a" style="left:151.5px;top:782.5px;width:58px;height:20px;background:linear-gradient(#FDFDFB,#F2F1EA);border:1px solid #A8B8D8;border-bottom:none;border-radius:2px 2px 0 0"></div>
<div class="tx " style="left:152.5px;top:787.5px;color:#111">Search result</div>
<div class="a" style="left:878px;top:70px;width:144px;height:16.5px;border:1px solid #C2CFEE;border-radius:3px;background:linear-gradient(#E2E9FA,#D3DDF6)"></div>
<div class="tx " style="left:880.5px;top:74px;color:#111">Categories Bar</div>
<svg style="left:983px;top:73.6px" width="10" height="9.5" viewBox="0 0 10 9.5"><rect x=".8" y=".8" width="8.4" height="8" rx="1.8" fill="#fff" stroke="#1A5AE0" stroke-width="1.6"/><rect x="3.6" y="3.5" width="2.8" height="2.6" fill="#1A5AE0"/></svg>
<svg style="left:996.8px;top:73.2px" width="9" height="10" viewBox="0 0 9 10"><path d="M2 .8h5M2.6 .8l.6 4.2M6.4 .8L5.8 5M.6 5.6h7.8M4.5 5.6V10" stroke="#2050C8" stroke-width="1.3" fill="none"/></svg>
<svg style="left:1008.8px;top:73.8px" width="9.5" height="9.2" viewBox="0 0 9.5 9.2"><rect x="0" y="0" width="9.5" height="9.2" fill="#DA5C12"/><path d="M2.3 2.2l4.9 4.8M7.2 2.2L2.3 7" stroke="#fff" stroke-width="1.7"/></svg>
<div class="a" style="left:877px;top:88px;width:146px;height:184.5px;background:#fff;border:1px solid #8DA2C4"></div>
<div class="a" style="left:886px;top:96.6px;width:9px;height:1px;background:repeating-linear-gradient(90deg,#D4CCBC 0 1px,transparent 1px 2px)"></div>
<div class="a" style="left:886px;top:111.00999999999999px;width:9px;height:1px;background:repeating-linear-gradient(90deg,#D4CCBC 0 1px,transparent 1px 2px)"></div>
<div class="a" style="left:886px;top:125.41999999999999px;width:9px;height:1px;background:repeating-linear-gradient(90deg,#D4CCBC 0 1px,transparent 1px 2px)"></div>
<div class="a" style="left:886px;top:139.82999999999998px;width:9px;height:1px;background:repeating-linear-gradient(90deg,#D4CCBC 0 1px,transparent 1px 2px)"></div>
<div class="a" style="left:886px;top:154.24px;width:9px;height:1px;background:repeating-linear-gradient(90deg,#D4CCBC 0 1px,transparent 1px 2px)"></div>
<div class="a" style="left:886px;top:168.64999999999998px;width:9px;height:1px;background:repeating-linear-gradient(90deg,#D4CCBC 0 1px,transparent 1px 2px)"></div>
<div class="a" style="left:886px;top:183.06px;width:9px;height:1px;background:repeating-linear-gradient(90deg,#D4CCBC 0 1px,transparent 1px 2px)"></div>
<div class="a" style="left:886px;top:197.47px;width:9px;height:1px;background:repeating-linear-gradient(90deg,#D4CCBC 0 1px,transparent 1px 2px)"></div>
<div class="a" style="left:886px;top:211.88px;width:9px;height:1px;background:repeating-linear-gradient(90deg,#D4CCBC 0 1px,transparent 1px 2px)"></div>
<div class="a" style="left:886px;top:90px;width:1px;height:122px;background:repeating-linear-gradient(#D4CCBC 0 1px,transparent 1px 2px)"></div>
<div class="a" style="left:893px;top:89px;width:128.5px;height:15px;border:1px dotted #4A5470"></div>
<svg style="left:895.5px;top:89.6px" width="14" height="14" viewBox="0 0 14 14"><circle cx="4.5" cy="4" r="2.6" fill="#F2C040"/><path d="M0 13c0-4 2-6 4.5-6s4.5 2 4.5 6z" fill="#3A70D8"/><circle cx="9.5" cy="5" r="2.6" fill="#8A4A1A"/><path d="M5.5 13.5c0-4 1.8-5.5 4-5.5s4 1.5 4 5.5z" fill="#30A040"/></svg>
<div class="tx " style="left:911.5px;top:92.0px;color:#111;transform:scaleX(.823)">1. FOUR WEEKS BEFORE</div>
<svg style="left:895.5px;top:104.00999999999999px" width="14" height="14" viewBox="0 0 14 14"><path d="M1 3c2-1 4-1 6 1v9c-2-2-4-2-6-1z" fill="#F8F0D8" stroke="#C89040" stroke-width=".8"/><path d="M7 4c2-2 4-2 6-1v9c-2-1-4-1-6 1z" fill="#FFF8E8" stroke="#C89040" stroke-width=".8"/><path d="M9 6l2-1" stroke="#4A80D0"/></svg>
<div class="tx " style="left:911.5px;top:106.41px;color:#111;transform:scaleX(.823)">2. THREE WEEKS BEFORE</div>
<svg style="left:895.5px;top:118.41999999999999px" width="14" height="14" viewBox="0 0 14 14"><rect x="2" y="1" width="10" height="12.5" fill="#F4ECDC" stroke="#C07830" stroke-width=".9"/><rect x="4" y="4" width="6" height="7" fill="#fff" stroke="#7890B8" stroke-width=".7"/><path d="M5 1v2M9 1v2" stroke="#555"/></svg>
<div class="tx " style="left:911.5px;top:120.82px;color:#111;transform:scaleX(.823)">3. TWO WEEKS BEFORE</div>
<svg style="left:895.5px;top:132.82999999999998px" width="14" height="14" viewBox="0 0 14 14"><ellipse cx="7" cy="7.5" rx="6.5" ry="5" fill="#E89838" stroke="#A86018" stroke-width=".7"/><circle cx="4" cy="6" r="1.2" fill="#3060D0"/><circle cx="7" cy="5" r="1.2" fill="#30A040"/><circle cx="10" cy="7" r="1.2" fill="#D03030"/></svg>
<div class="tx " style="left:911.5px;top:135.23px;color:#111;transform:scaleX(.823)">4. ONE WEEK BEFORE</div>
<svg style="left:895.5px;top:147.24px" width="13" height="14" viewBox="0 0 13 14"><path d="M1.3 .5v12.5" stroke="#404858" stroke-width="1.6"/><path d="M2 .8c2-.6 3 .2 4.5 0s3-.5 4.5 0v6.8c-1.5.6-3 .3-4.5 .8S3.5 8 2 8z" fill="#8A9CF6"/><path d="M6 .6v7.6" stroke="#2A3CC8" stroke-width="1.8"/><path d="M11 .6v7.2" stroke="#2A3CC8" stroke-width="1.3"/><path d="M2.5 1.5v6" stroke="#4A62E0" stroke-width="1"/></svg>
<div class="tx " style="left:911.5px;top:149.64000000000001px;color:#111;transform:scaleX(.823)">5. MONDAY</div>
<svg style="left:895.5px;top:161.64999999999998px" width="14" height="13" viewBox="0 0 14 13"><path d="M6.8 3C7.8 .6 11.8 0 13 2.3s.2 5.4-2.6 5.8C9 8.3 7.8 7.6 7 6.4z" fill="#FCE69A" stroke="#F0A818" stroke-width="1.4"/><circle cx="10.4" cy="3" r="1" fill="#D04010"/><path d="M7.8 6.2L1.5 11.8" stroke="#F0A818" stroke-width="2.8"/><path d="M2.6 9.6l1.8 1.8" stroke="#F0A818" stroke-width="1.6"/></svg>
<div class="tx " style="left:911.5px;top:164.04999999999998px;color:#111;transform:scaleX(.823)">6. TUESDAY</div>
<svg style="left:895.5px;top:176.06px" width="13" height="12" viewBox="0 0 13 12"><path d="M12.5 .5H5.5L3.5 3.5 5 4 3 6.5 .5 11.5 6.5 6.5 8 5 7 4.3 9.5 2.8z" fill="#2E5CE0"/><path d="M6 2.5l1 2.5" stroke="#fff" stroke-width="1.2"/><path d="M1 11l5-4.5" stroke="#0A2AB0" stroke-width="1.5"/></svg>
<div class="tx " style="left:911.5px;top:178.46px;color:#111;transform:scaleX(.823)">7. WEDNESDAY</div>
<svg style="left:895.5px;top:190.47px" width="14" height="14" viewBox="0 0 14 14"><circle cx="7" cy="7" r="6.4" fill="#F4B424"/><path d="M2 5.5A5.5 5.5 0 0 1 7 1.2" stroke="#FFEEA0" stroke-width="1.5" fill="none"/><rect x="3.5" y="4" width="2" height="2" fill="#1A3A4A"/><rect x="7.8" y="4" width="2" height="2" fill="#1A3A4A"/><path d="M3.6 7.5h6.4v1.5c-1 2-5.4 2-6.4 0z" fill="#1C2C3C"/><rect x="3.8" y="7.3" width="6" height="1.3" fill="#30A030"/><circle cx="7.5" cy="10" r=".9" fill="#2050E0"/></svg>
<div class="tx " style="left:911.5px;top:192.87px;color:#111;transform:scaleX(.823)">8. THANKSGIVING DAY</div>
<svg style="left:895.5px;top:204.88px" width="14" height="14" viewBox="0 0 14 14"><rect x="2" y="1" width="10" height="9" rx="1" fill="#A8B8D0" stroke="#506080" stroke-width=".8"/><rect x="3.5" y="2.5" width="7" height="6" fill="#6A90C8"/><rect x="4" y="10.5" width="6" height="3" fill="#8090A8"/></svg>
<div class="tx " style="left:911.5px;top:207.28px;color:#111;transform:scaleX(.9)">9. The Day After</div>
<div class="a" style="left:876px;top:274px;width:1px;height:529px;background:#B4C0D2"></div>
<div class="a" style="left:878px;top:276px;width:144px;height:17.5px;border:1px solid #DDD9C8;border-radius:3px;background:linear-gradient(#FCFBF7,#F0EEE4)"></div>
<div class="tx " style="left:880.5px;top:280.5px;color:#111">Filters Bar</div>
<svg style="left:983px;top:280.6px" width="10" height="9.5" viewBox="0 0 10 9.5"><rect x=".8" y=".8" width="8.4" height="8" rx="1.8" fill="#fff" stroke="#1A5AE0" stroke-width="1.6"/><rect x="3.6" y="3.5" width="2.8" height="2.6" fill="#1A5AE0"/></svg>
<svg style="left:996.8px;top:280.2px" width="9" height="10" viewBox="0 0 9 10"><path d="M2 .8h5M2.6 .8l.6 4.2M6.4 .8L5.8 5M.6 5.6h7.8M4.5 5.6V10" stroke="#2050C8" stroke-width="1.3" fill="none"/></svg>
<svg style="left:1008.8px;top:280.8px" width="9.5" height="9.2" viewBox="0 0 9.5 9.2"><rect x="0" y="0" width="9.5" height="9.2" fill="#DA5C12"/><path d="M2.3 2.2l4.9 4.8M7.2 2.2L2.3 7" stroke="#fff" stroke-width="1.7"/></svg>
<div class="tx " style="left:885px;top:300.6px;color:#333;font-weight:bold;font-size:10.5px;transform:scaleX(.88)">Filter By Done:</div>
<div class="a" style="left:884.3px;top:314.4px;width:96.5px;height:16px;background:#fff;border:1px solid #7F9DB9"></div>
<div class="tx " style="left:886.5px;top:318.3px;color:#111">All</div>
<div class="a" style="left:967px;top:315.5px;width:12.5px;height:14px;background:linear-gradient(#DCE5FB,#B9CAF3);border-radius:2px"></div>
<svg style="left:967px;top:315.5px" width="12.5" height="14" viewBox="0 0 12.5 14"><path d="M3.5 5.5l2.8 2.8 2.8-2.8" stroke="#4D6185" stroke-width="1.6" fill="none"/></svg>
<div class="tx " style="left:885.2px;top:338.6px;color:#333;font-weight:bold;font-size:10.5px;transform:scaleX(.88)">Filter By Due Date:</div>
<svg style="left:886px;top:359px" width="4" height="6" viewBox="0 0 4 6"><path d="M3.5 0v6L0 3z" fill="#111"/></svg>
<svg style="left:993.5px;top:359px" width="4" height="6" viewBox="0 0 4 6"><path d="M0 0v6l3.5-3z" fill="#111"/></svg>
<div class="tx " style="left:916px;top:358px;color:#222">Ноябрь 2005</div>
<div class="a" style="left:882px;top:369px;width:120px;height:1.2px;background:repeating-linear-gradient(90deg,#333 0 1px,#999 1px 2px)"></div>
<div class="tx " style="left:897.2px;top:371.6px;color:#333">П</div>
<div class="tx " style="left:911.6px;top:371.6px;color:#333">В</div>
<div class="tx " style="left:926.0px;top:371.6px;color:#333">С</div>
<div class="tx " style="left:940.4000000000001px;top:371.6px;color:#333">Ч</div>
<div class="tx " style="left:954.8000000000001px;top:371.6px;color:#333">П</div>
<div class="tx " style="left:969.2px;top:371.6px;color:#333">С</div>
<div class="tx " style="left:983.6px;top:371.6px;color:#333">В</div>
<div class="a" style="left:891px;top:381px;width:101px;height:1px;background:#B8B4A4"></div>
<div class="tx " style="left:895.695px;top:385.40000000000003px;color:#A8A698;font-weight:bold;font-size:10px;transform:scaleX(.8)">31</div>
<div class="tx " style="left:912.3475px;top:385.40000000000003px;color:#222;font-weight:bold;font-size:10px;transform:scaleX(.8)">1</div>
<div class="tx " style="left:926.7475px;top:385.40000000000003px;color:#222;font-weight:bold;font-size:10px;transform:scaleX(.8)">2</div>
<div class="tx " style="left:941.1475px;top:385.40000000000003px;color:#222;font-weight:bold;font-size:10px;transform:scaleX(.8)">3</div>
<div class="tx " style="left:955.5475px;top:385.40000000000003px;color:#222;font-weight:bold;font-size:10px;transform:scaleX(.8)">4</div>
<div class="tx " style="left:969.9475px;top:385.40000000000003px;color:#222;font-weight:bold;font-size:10px;transform:scaleX(.8)">5</div>
<div class="tx " style="left:984.3475px;top:385.40000000000003px;color:#222;font-weight:bold;font-size:10px;transform:scaleX(.8)">6</div>
<div class="a" style="left:891px;top:395.2px;width:15px;height:11.2px;background:#316AC5;border:1px solid #D05A10"></div>
<div class="tx " style="left:897.9475px;top:397.6px;color:#fff;font-weight:bold;font-size:10px;transform:scaleX(.8)">7</div>
<div class="tx " style="left:912.3475px;top:397.6px;color:#222;font-weight:bold;font-size:10px;transform:scaleX(.8)">8</div>
<div class="tx " style="left:926.7475px;top:397.6px;color:#222;font-weight:bold;font-size:10px;transform:scaleX(.8)">9</div>
<div class="tx " style="left:938.8950000000001px;top:397.6px;color:#222;font-weight:bold;font-size:10px;transform:scaleX(.8)">10</div>
<div class="tx " style="left:953.2950000000001px;top:397.6px;color:#222;font-weight:bold;font-size:10px;transform:scaleX(.8)">11</div>
<div class="tx " style="left:967.695px;top:397.6px;color:#222;font-weight:bold;font-size:10px;transform:scaleX(.8)">12</div>
<div class="tx " style="left:982.095px;top:397.6px;color:#222;font-weight:bold;font-size:10px;transform:scaleX(.8)">13</div>
<div class="tx " style="left:895.695px;top:409.6px;color:#222;font-weight:bold;font-size:10px;transform:scaleX(.8)">14</div>
<div class="tx " style="left:910.095px;top:409.6px;color:#222;font-weight:bold;font-size:10px;transform:scaleX(.8)">15</div>
<div class="tx " style="left:924.495px;top:409.6px;color:#222;font-weight:bold;font-size:10px;transform:scaleX(.8)">16</div>
<div class="tx " style="left:938.8950000000001px;top:409.6px;color:#222;font-weight:bold;font-size:10px;transform:scaleX(.8)">17</div>
<div class="tx " style="left:953.2950000000001px;top:409.6px;color:#222;font-weight:bold;font-size:10px;transform:scaleX(.8)">18</div>
<div class="tx " style="left:967.695px;top:409.6px;color:#222;font-weight:bold;font-size:10px;transform:scaleX(.8)">19</div>
<div class="tx " style="left:982.095px;top:409.6px;color:#222;font-weight:bold;font-size:10px;transform:scaleX(.8)">20</div>
<div class="tx " style="left:895.695px;top:421.6px;color:#222;font-weight:bold;font-size:10px;transform:scaleX(.8)">21</div>
<div class="tx " style="left:910.095px;top:421.6px;color:#222;font-weight:bold;font-size:10px;transform:scaleX(.8)">22</div>
<div class="tx " style="left:924.495px;top:421.6px;color:#222;font-weight:bold;font-size:10px;transform:scaleX(.8)">23</div>
<div class="tx " style="left:938.8950000000001px;top:421.6px;color:#222;font-weight:bold;font-size:10px;transform:scaleX(.8)">24</div>
<div class="tx " style="left:953.2950000000001px;top:421.6px;color:#222;font-weight:bold;font-size:10px;transform:scaleX(.8)">25</div>
<div class="tx " style="left:967.695px;top:421.6px;color:#222;font-weight:bold;font-size:10px;transform:scaleX(.8)">26</div>
<div class="tx " style="left:982.095px;top:421.6px;color:#222;font-weight:bold;font-size:10px;transform:scaleX(.8)">27</div>
<div class="tx " style="left:895.695px;top:433.6px;color:#222;font-weight:bold;font-size:10px;transform:scaleX(.8)">28</div>
<div class="tx " style="left:910.095px;top:433.6px;color:#222;font-weight:bold;font-size:10px;transform:scaleX(.8)">29</div>
<div class="tx " style="left:924.495px;top:433.6px;color:#222;font-weight:bold;font-size:10px;transform:scaleX(.8)">30</div>
<div class="tx " style="left:941.1475px;top:433.6px;color:#A8A698;font-weight:bold;font-size:10px;transform:scaleX(.8)">1</div>
<div class="tx " style="left:955.5475px;top:433.6px;color:#A8A698;font-weight:bold;font-size:10px;transform:scaleX(.8)">2</div>
<div class="tx " style="left:969.9475px;top:433.6px;color:#A8A698;font-weight:bold;font-size:10px;transform:scaleX(.8)">3</div>
<div class="tx " style="left:984.3475px;top:433.6px;color:#A8A698;font-weight:bold;font-size:10px;transform:scaleX(.8)">4</div>
<div class="tx " style="left:897.9475px;top:445.70000000000005px;color:#A8A698;font-weight:bold;font-size:10px;transform:scaleX(.8)">5</div>
<div class="tx " style="left:912.3475px;top:445.70000000000005px;color:#A8A698;font-weight:bold;font-size:10px;transform:scaleX(.8)">6</div>
<div class="tx " style="left:926.7475px;top:445.70000000000005px;color:#A8A698;font-weight:bold;font-size:10px;transform:scaleX(.8)">7</div>
<div class="tx " style="left:941.1475px;top:445.70000000000005px;color:#A8A698;font-weight:bold;font-size:10px;transform:scaleX(.8)">8</div>
<div class="tx " style="left:955.5475px;top:445.70000000000005px;color:#A8A698;font-weight:bold;font-size:10px;transform:scaleX(.8)">9</div>
<div class="tx " style="left:967.695px;top:445.70000000000005px;color:#A8A698;font-weight:bold;font-size:10px;transform:scaleX(.8)">10</div>
<div class="tx " style="left:982.095px;top:445.70000000000005px;color:#A8A698;font-weight:bold;font-size:10px;transform:scaleX(.8)">11</div>
<div class="a" style="left:891px;top:455.2px;width:101px;height:1px;background:#B0AC9C"></div>
<div class="a" style="left:897px;top:460.2px;width:37.5px;height:15px;border:1px solid #4A6AA8;border-radius:2px;background:linear-gradient(#FFFFFF,#EFEEE8 70%,#DCDAD0)"></div>
<div class="tx " style="left:901px;top:462.6px;color:#A8A698;font-weight:bold;font-size:11px;transform:scaleX(.95)">Today</div>
<div class="a" style="left:949.6px;top:460.2px;width:37.5px;height:15px;border:1px solid #4A6AA8;border-radius:2px;background:linear-gradient(#FFFFFF,#EFEEE8 70%,#DCDAD0)"></div>
<div class="tx " style="left:953.6px;top:462.6px;color:#A8A698;font-weight:bold;font-size:11px;transform:scaleX(.95)">Clear</div>
<div class="a" style="left:884.1px;top:487.3px;width:115.6px;height:16.4px;background:#fff;border:1px solid #7F9DB9"></div>
<div class="tx " style="left:886.5px;top:490.5px;color:#111">is less than or equal to</div>
<div class="a" style="left:986px;top:488.6px;width:12.4px;height:14px;background:linear-gradient(#DCE5FB,#B9CAF3);border-radius:2px"></div>
<svg style="left:986px;top:488.6px" width="12.4" height="14" viewBox="0 0 12.4 14"><path d="M3.5 5.5l2.8 2.8 2.8-2.8" stroke="#4D6185" stroke-width="1.6" fill="none"/></svg>
<div class="a" style="left:913.3px;top:780px;width:89.5px;height:15.5px;background:#FFFFF4;border:1px solid #222"></div>
<div class="tx " style="left:915.5px;top:783.5px;color:#111;transform:scaleX(.865)">English (United States)</div>
</body></html>
